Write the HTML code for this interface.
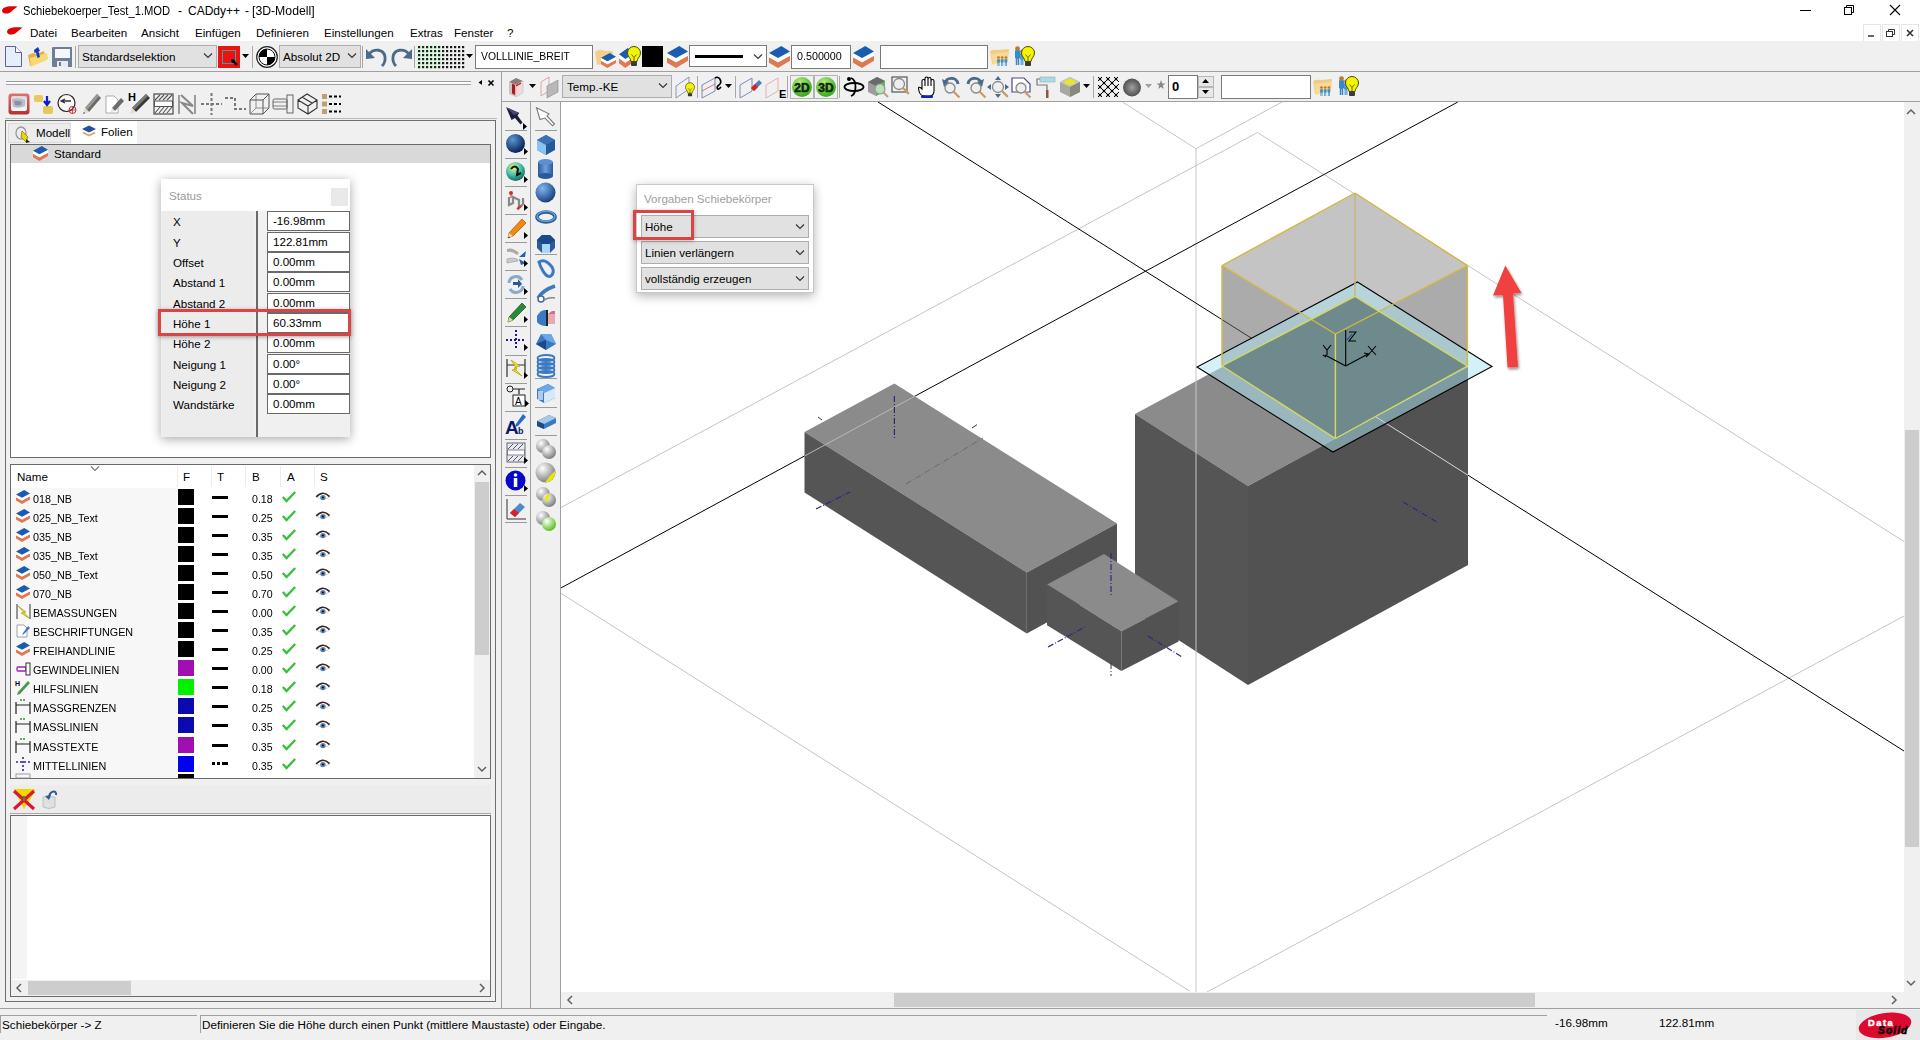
<!DOCTYPE html>
<html><head><meta charset="utf-8">
<style>
*{box-sizing:border-box;margin:0;padding:0}
html,body{width:1920px;height:1040px;overflow:hidden;background:#f0f0f0;font-family:"Liberation Sans",sans-serif;font-size:12px;color:#000}
.a{position:absolute}
.t{position:absolute;white-space:pre;line-height:14px}
svg{position:absolute;overflow:visible}
</style></head><body>

<div class="a" style="left:0px;top:0px;width:1920px;height:41px;background:#fff;"></div>
<svg style="left:0px;top:0px;" width="40" height="41" viewBox="0 0 40 41"><path d="M2 11 C2 7 8 5.5 17.5 6.5 C16 8 14 9 12.5 10.5 C10 14 3 15 2 11Z" fill="#e40000"/><path d="M7 32 C7 28 13 26.5 22.5 27.5 C21 29 19 30 17.5 31.5 C15 35 8 36 7 32Z" fill="#e40000"/></svg>
<div class="t" style="left:23px;top:3.6px;font-size:12px;color:#000;transform:scaleX(0.935);transform-origin:0 0;">Schiebekoerper_Test_1.MOD</div>
<div class="t" style="left:178px;top:3.6px;font-size:12px;color:#000;">-</div>
<div class="t" style="left:188px;top:3.6px;font-size:12px;color:#000;">CADdy++</div>
<div class="t" style="left:245px;top:3.6px;font-size:12px;color:#000;">-</div>
<div class="t" style="left:252px;top:3.6px;font-size:12px;color:#000;transform:scaleX(1.02);transform-origin:0 0;">[3D-Modell]</div>
<div class="t" style="left:30px;top:26px;font-size:11.6px;color:#000;">Datei</div>
<div class="t" style="left:71px;top:26px;font-size:11.6px;color:#000;">Bearbeiten</div>
<div class="t" style="left:141px;top:26px;font-size:11.6px;color:#000;">Ansicht</div>
<div class="t" style="left:195px;top:26px;font-size:11.6px;color:#000;">Einfügen</div>
<div class="t" style="left:256px;top:26px;font-size:11.6px;color:#000;">Definieren</div>
<div class="t" style="left:324px;top:26px;font-size:11.6px;color:#000;">Einstellungen</div>
<div class="t" style="left:410px;top:26px;font-size:11.6px;color:#000;">Extras</div>
<div class="t" style="left:454px;top:26px;font-size:11.6px;color:#000;">Fenster</div>
<div class="t" style="left:507px;top:26px;font-size:11.6px;color:#000;">?</div>
<svg style="left:1780px;top:0px;" width="140" height="41" viewBox="0 0 140 41"><line x1="20" y1="10.5" x2="31" y2="10.5" stroke="#000"/><rect x="64.5" y="7.5" width="7" height="7" fill="none" stroke="#000"/><path d="M66.5 7.5 V5.5 H73.5 V12.5 H71.5" fill="none" stroke="#000"/><path d="M110 5 L120 15 M120 5 L110 15" stroke="#000" stroke-width="1.1"/><rect x="83.5" y="24.5" width="17" height="17" fill="#fff" stroke="#e6e6e6"/><rect x="102.5" y="24.5" width="17" height="17" fill="#fff" stroke="#e6e6e6"/><rect x="121.5" y="24.5" width="17" height="17" fill="#fff" stroke="#e6e6e6"/><line x1="88" y1="36" x2="94" y2="36" stroke="#333" stroke-width="1.5"/><rect x="106.5" y="31.5" width="6" height="5" fill="none" stroke="#333"/><path d="M108.5 31.5 V29.5 H114.5 V34.5 H112.5" fill="none" stroke="#333"/><path d="M127 30 L133 36 M133 30 L127 36" stroke="#333" stroke-width="1.6"/></svg>
<div class="a" style="left:0px;top:41px;width:1920px;height:30px;background:#f0f0f0;"></div>
<div class="a" style="left:0px;top:71px;width:1920px;height:1px;background:#a0a0a0;"></div>
<svg style="left:5px;top:46px;" width="18" height="22" viewBox="0 0 18 22"><path d="M0.5 0.5 H10.5 L16.5 6.5 V20.5 H0.5Z" fill="#e6eefb" stroke="#5a648c"/><path d="M10.5 0.5 V6.5 H16.5" fill="#fff" stroke="#5a648c"/></svg>
<svg style="left:27px;top:46px;" width="21" height="22" viewBox="0 0 21 22"><path d="M1 9 L6 7 L9 8 L17 5 L19 14 L3 20Z" fill="#e8b040"/><path d="M3 12 L20 7 L21 13 L4 21Z" fill="#f8d870"/><path d="M7 4 L11 1 L13 5 L11.5 5.5 L13 11 L10.5 12 L9 6.5 L7.5 7Z" fill="#1038c0"/></svg>
<svg style="left:52px;top:47px;" width="21" height="21" viewBox="0 0 21 21"><path d="M0 1 Q0 0 1 0 H20 V20 H1 Q0 20 0 19Z" fill="#6e7e94"/><rect x="3" y="2" width="15" height="9" fill="#f4f6fa"/><rect x="5" y="14" width="11" height="6" fill="#e8ecf2"/><rect x="7" y="15" width="2" height="4" fill="#6e7e94"/></svg>
<div class="a" style="left:75px;top:46px;width:1px;height:22px;background:#a8a8a8;"></div>
<div class="a" style="left:78px;top:45px;width:139px;height:23px;background:#e1e1e1;border:1px solid #adadad;"></div>
<div class="t" style="left:82px;top:50px;font-size:11.7px;color:#000;">Standardselektion</div>
<svg style="left:203px;top:53px" width="10" height="6" viewBox="0 0 10 6"><path d="M1 0.5 L5 4.5 L9 0.5" fill="none" stroke="#333" stroke-width="1.1"/></svg>
<div class="a" style="left:218px;top:46px;width:22px;height:22px;background:#e81414;"></div>
<svg style="left:218px;top:46px;" width="22" height="22" viewBox="0 0 22 22"><rect x="4.5" y="4.5" width="13" height="13" fill="#f01010" stroke="#40a0a0" stroke-width="1"/><path d="M14 14 L19 19" stroke="#000" stroke-width="2.5"/><path d="M13 13 L17 14 L14 17Z" fill="#000"/></svg>
<svg style="left:242px;top:54px" width="7" height="4" viewBox="0 0 7 4"><path d="M0 0 H7 L3.5 4Z" fill="#000"/></svg>
<div class="a" style="left:252px;top:46px;width:1px;height:22px;background:#a8a8a8;"></div>
<svg style="left:256px;top:46px;" width="22" height="22" viewBox="0 0 22 22"><circle cx="11" cy="11" r="10.3" fill="#fff" stroke="#222" stroke-width="1.2"/><circle cx="11" cy="11" r="8" fill="#fff" stroke="#111" stroke-width="1"/><path d="M11 3 A8 8 0 0 0 3 11 H11Z" fill="#000"/><path d="M11 19 A8 8 0 0 0 19 11 H11Z" fill="#000"/></svg>
<div class="a" style="left:279px;top:45px;width:82px;height:23px;background:#e1e1e1;border:1px solid #adadad;"></div>
<div class="t" style="left:283px;top:50px;font-size:11.7px;color:#000;">Absolut 2D</div>
<svg style="left:347px;top:53px" width="10" height="6" viewBox="0 0 10 6"><path d="M1 0.5 L5 4.5 L9 0.5" fill="none" stroke="#333" stroke-width="1.1"/></svg>
<div class="a" style="left:362px;top:46px;width:1px;height:22px;background:#a8a8a8;"></div>
<svg style="left:366px;top:47px;" width="22" height="20" viewBox="0 0 22 20"><path d="M3 7 C8 1 18 2 19 10 C19.5 14 18 17 16 19" fill="none" stroke="#4a6b8a" stroke-width="2.8"/><path d="M0 2 L0 12 L9 11Z" fill="#4a6b8a"/></svg>
<svg style="left:390px;top:47px;" width="22" height="20" viewBox="0 0 22 20"><path d="M19 7 C14 1 4 2 3 10 C2.5 14 4 17 6 19" fill="none" stroke="#4a6b8a" stroke-width="2.8"/><path d="M22 2 L22 12 L13 11Z" fill="#4a6b8a"/></svg>
<div class="a" style="left:414px;top:46px;width:1px;height:22px;background:#a8a8a8;"></div>
<svg style="left:418px;top:46px;" width="48" height="24" viewBox="0 0 48 24"><rect x="-1" y="-1" width="24" height="24" fill="#dff5df" opacity="0.5"/><rect x="0" y="0" width="2.2" height="2.2" fill="#0a3010"/><rect x="4" y="0" width="2.2" height="2.2" fill="#0a3010"/><rect x="8" y="0" width="2.2" height="2.2" fill="#0a3010"/><rect x="12" y="0" width="2.2" height="2.2" fill="#0a3010"/><rect x="16" y="0" width="2.2" height="2.2" fill="#0a3010"/><rect x="20" y="0" width="2.2" height="2.2" fill="#0a3010"/><rect x="24" y="0" width="2.2" height="2.2" fill="#1a1a1a"/><rect x="28" y="0" width="2.2" height="2.2" fill="#1a1a1a"/><rect x="32" y="0" width="2.2" height="2.2" fill="#1a1a1a"/><rect x="36" y="0" width="2.2" height="2.2" fill="#1a1a1a"/><rect x="40" y="0" width="2.2" height="2.2" fill="#1a1a1a"/><rect x="44" y="0" width="2.2" height="2.2" fill="#1a1a1a"/><rect x="0" y="4" width="2.2" height="2.2" fill="#0a3010"/><rect x="4" y="4" width="2.2" height="2.2" fill="#0a3010"/><rect x="8" y="4" width="2.2" height="2.2" fill="#0a3010"/><rect x="12" y="4" width="2.2" height="2.2" fill="#0a3010"/><rect x="16" y="4" width="2.2" height="2.2" fill="#0a3010"/><rect x="20" y="4" width="2.2" height="2.2" fill="#0a3010"/><rect x="24" y="4" width="2.2" height="2.2" fill="#1a1a1a"/><rect x="28" y="4" width="2.2" height="2.2" fill="#1a1a1a"/><rect x="32" y="4" width="2.2" height="2.2" fill="#1a1a1a"/><rect x="36" y="4" width="2.2" height="2.2" fill="#1a1a1a"/><rect x="40" y="4" width="2.2" height="2.2" fill="#1a1a1a"/><rect x="44" y="4" width="2.2" height="2.2" fill="#1a1a1a"/><rect x="0" y="8" width="2.2" height="2.2" fill="#0a3010"/><rect x="4" y="8" width="2.2" height="2.2" fill="#0a3010"/><rect x="8" y="8" width="2.2" height="2.2" fill="#0a3010"/><rect x="12" y="8" width="2.2" height="2.2" fill="#0a3010"/><rect x="16" y="8" width="2.2" height="2.2" fill="#0a3010"/><rect x="20" y="8" width="2.2" height="2.2" fill="#0a3010"/><rect x="24" y="8" width="2.2" height="2.2" fill="#1a1a1a"/><rect x="28" y="8" width="2.2" height="2.2" fill="#1a1a1a"/><rect x="32" y="8" width="2.2" height="2.2" fill="#1a1a1a"/><rect x="36" y="8" width="2.2" height="2.2" fill="#1a1a1a"/><rect x="40" y="8" width="2.2" height="2.2" fill="#1a1a1a"/><rect x="44" y="8" width="2.2" height="2.2" fill="#1a1a1a"/><rect x="0" y="12" width="2.2" height="2.2" fill="#0a3010"/><rect x="4" y="12" width="2.2" height="2.2" fill="#0a3010"/><rect x="8" y="12" width="2.2" height="2.2" fill="#0a3010"/><rect x="12" y="12" width="2.2" height="2.2" fill="#0a3010"/><rect x="16" y="12" width="2.2" height="2.2" fill="#0a3010"/><rect x="20" y="12" width="2.2" height="2.2" fill="#0a3010"/><rect x="24" y="12" width="2.2" height="2.2" fill="#1a1a1a"/><rect x="28" y="12" width="2.2" height="2.2" fill="#1a1a1a"/><rect x="32" y="12" width="2.2" height="2.2" fill="#1a1a1a"/><rect x="36" y="12" width="2.2" height="2.2" fill="#1a1a1a"/><rect x="40" y="12" width="2.2" height="2.2" fill="#1a1a1a"/><rect x="44" y="12" width="2.2" height="2.2" fill="#1a1a1a"/><rect x="0" y="16" width="2.2" height="2.2" fill="#0a3010"/><rect x="4" y="16" width="2.2" height="2.2" fill="#0a3010"/><rect x="8" y="16" width="2.2" height="2.2" fill="#0a3010"/><rect x="12" y="16" width="2.2" height="2.2" fill="#0a3010"/><rect x="16" y="16" width="2.2" height="2.2" fill="#0a3010"/><rect x="20" y="16" width="2.2" height="2.2" fill="#0a3010"/><rect x="24" y="16" width="2.2" height="2.2" fill="#1a1a1a"/><rect x="28" y="16" width="2.2" height="2.2" fill="#1a1a1a"/><rect x="32" y="16" width="2.2" height="2.2" fill="#1a1a1a"/><rect x="36" y="16" width="2.2" height="2.2" fill="#1a1a1a"/><rect x="40" y="16" width="2.2" height="2.2" fill="#1a1a1a"/><rect x="44" y="16" width="2.2" height="2.2" fill="#1a1a1a"/><rect x="0" y="20" width="2.2" height="2.2" fill="#0a3010"/><rect x="4" y="20" width="2.2" height="2.2" fill="#0a3010"/><rect x="8" y="20" width="2.2" height="2.2" fill="#0a3010"/><rect x="12" y="20" width="2.2" height="2.2" fill="#0a3010"/><rect x="16" y="20" width="2.2" height="2.2" fill="#0a3010"/><rect x="20" y="20" width="2.2" height="2.2" fill="#0a3010"/><rect x="24" y="20" width="2.2" height="2.2" fill="#1a1a1a"/><rect x="28" y="20" width="2.2" height="2.2" fill="#1a1a1a"/><rect x="32" y="20" width="2.2" height="2.2" fill="#1a1a1a"/><rect x="36" y="20" width="2.2" height="2.2" fill="#1a1a1a"/><rect x="40" y="20" width="2.2" height="2.2" fill="#1a1a1a"/><rect x="44" y="20" width="2.2" height="2.2" fill="#1a1a1a"/></svg>
<svg style="left:466px;top:54px" width="7" height="4" viewBox="0 0 7 4"><path d="M0 0 H7 L3.5 4Z" fill="#000"/></svg>
<div class="a" style="left:475px;top:45px;width:118px;height:24px;background:#fff;border:1px solid #7a7a7a;"></div>
<div class="t" style="left:481px;top:49px;font-size:11.8px;color:#000;transform:scaleX(0.88);transform-origin:0 0;">VOLLLINIE_BREIT</div>
<svg style="left:594px;top:46px;" width="22" height="22" viewBox="0 0 22 22"><path d="M1 6 Q4 3 8 4 L12 5 Q17 4 19 6 L18 16 L3 19Z" fill="#f3c870" opacity="0.8"/></svg>
<svg style="left:601px;top:53px" width="15" height="15" viewBox="0 0 14 14" preserveAspectRatio="none"><path d="M0 7.2 L6 10.4 L14 6.2 L14 9.4 L6 14 L0 10.6Z" fill="#e07850"/><path d="M0 4.4 L6 7.7 L14 3.5 L14 6.2 L6 10.4 L0 7.2Z" fill="#fff"/><path d="M0 4.4 L8.2 0 L14 3.5 L6 7.7Z" fill="#1a5cb0"/></svg>
<svg style="left:619px;top:48px" width="15" height="20" viewBox="0 0 14 14" preserveAspectRatio="none"><path d="M0 7.2 L6 10.4 L14 6.2 L14 9.4 L6 14 L0 10.6Z" fill="#e07850"/><path d="M0 4.4 L6 7.7 L14 3.5 L14 6.2 L6 10.4 L0 7.2Z" fill="#fff"/><path d="M0 4.4 L8.2 0 L14 3.5 L6 7.7Z" fill="#1a5cb0"/></svg>
<svg style="left:618px;top:46px;" width="24" height="22" viewBox="0 0 24 22"><g transform="translate(16 9.5) scale(1.0)"><path d="M-3 6 C-3 3 -6.5 1 -6.5 -2.5 A6.5 6.5 0 0 1 6.5 -2.5 C6.5 1 3 3 3 6Z" fill="#f4f400" stroke="#4a4a10" stroke-width="1"/><path d="M-2.5 -1 L0 2 L2.5 -1 M0 2 V6" stroke="#6a6a10" stroke-width="1" fill="none"/><rect x="-3" y="6" width="6" height="4.5" rx="1" fill="#3a3a3a"/></g></svg>
<div class="a" style="left:642px;top:46px;width:21px;height:21px;background:#000;"></div>
<svg style="left:667px;top:46px" width="21" height="22" viewBox="0 0 14 14" preserveAspectRatio="none"><path d="M0 7.2 L6 10.4 L14 6.2 L14 9.4 L6 14 L0 10.6Z" fill="#e07850"/><path d="M0 4.4 L6 7.7 L14 3.5 L14 6.2 L6 10.4 L0 7.2Z" fill="#fff"/><path d="M0 4.4 L8.2 0 L14 3.5 L6 7.7Z" fill="#1a5cb0"/></svg>
<div class="a" style="left:689px;top:45px;width:78px;height:22px;background:#fff;border:1px solid #7a7a7a;"></div>
<div class="a" style="left:695px;top:55px;width:48px;height:3px;background:#000;"></div>
<svg style="left:753px;top:54px" width="10" height="6" viewBox="0 0 10 6"><path d="M1 0.5 L5 4.5 L9 0.5" fill="none" stroke="#333" stroke-width="1.1"/></svg>
<svg style="left:769px;top:46px" width="21" height="22" viewBox="0 0 14 14" preserveAspectRatio="none"><path d="M0 7.2 L6 10.4 L14 6.2 L14 9.4 L6 14 L0 10.6Z" fill="#e07850"/><path d="M0 4.4 L6 7.7 L14 3.5 L14 6.2 L6 10.4 L0 7.2Z" fill="#fff"/><path d="M0 4.4 L8.2 0 L14 3.5 L6 7.7Z" fill="#1a5cb0"/></svg>
<div class="a" style="left:791px;top:45px;width:60px;height:24px;background:#fff;border:1px solid #7a7a7a;"></div>
<div class="t" style="left:797px;top:49px;font-size:11.8px;color:#000;transform:scaleX(0.91);transform-origin:0 0;">0.500000</div>
<svg style="left:853px;top:46px" width="21" height="22" viewBox="0 0 14 14" preserveAspectRatio="none"><path d="M0 7.2 L6 10.4 L14 6.2 L14 9.4 L6 14 L0 10.6Z" fill="#e07850"/><path d="M0 4.4 L6 7.7 L14 3.5 L14 6.2 L6 10.4 L0 7.2Z" fill="#fff"/><path d="M0 4.4 L8.2 0 L14 3.5 L6 7.7Z" fill="#1a5cb0"/></svg>
<div class="a" style="left:880px;top:45px;width:108px;height:24px;background:#fff;border:1px solid #7a7a7a;"></div>
<svg style="left:989px;top:46px;" width="22" height="22" viewBox="0 0 22 22"><path d="M1 5 Q5 3 9 4 L20 3 L19 14 L3 18Z" fill="#f2c878" opacity="0.9"/><path d="M2 8 L19 6 L18 15 L4 19Z" fill="#f8dc98" opacity="0.9"/><circle cx="9.5" cy="11.5" r="1.3299999999999998" fill="#b87a30"/><path d="M8.1 13.2 H10.9 V16.2 H10.48 V20 H9.75 V16.8 H9.25 V20 H8.52 V16.2 H8.1Z" fill="#3a90c8"/><circle cx="13.2" cy="11.5" r="1.3299999999999998" fill="#b87a30"/><path d="M11.799999999999999 13.2 H14.6 V16.2 H14.18 V20 H13.45 V16.8 H12.95 V20 H12.219999999999999 V16.2 H11.799999999999999Z" fill="#3a90c8"/><circle cx="16.9" cy="11.5" r="1.3299999999999998" fill="#b87a30"/><path d="M15.499999999999998 13.2 H18.299999999999997 V16.2 H17.88 V20 H17.15 V16.8 H16.65 V20 H15.919999999999998 V16.2 H15.499999999999998Z" fill="#3a90c8"/></svg>
<svg style="left:1013px;top:46px;" width="22" height="22" viewBox="0 0 22 22"><circle cx="9" cy="5.5" r="1.9" fill="#b87a30"/><path d="M7.0 7.2 H11.0 V13.3 H10.4 V19 H9.25 V14.200000000000001 H8.75 V19 H7.6 V13.3 H7.0Z" fill="#4a9ad8"/><circle cx="4.5" cy="2.5" r="2.375" fill="#b87a30"/><path d="M2.0 4.2 H7.0 V12.16 H6.25 V19 H4.75 V13.24 H4.25 V19 H2.75 V12.16 H2.0Z" fill="#3a88c8"/><g transform="translate(15 9.5) scale(1.0)"><path d="M-3 6 C-3 3 -6.5 1 -6.5 -2.5 A6.5 6.5 0 0 1 6.5 -2.5 C6.5 1 3 3 3 6Z" fill="#f4f400" stroke="#4a4a10" stroke-width="1"/><path d="M-2.5 -1 L0 2 L2.5 -1 M0 2 V6" stroke="#6a6a10" stroke-width="1" fill="none"/><rect x="-3" y="6" width="6" height="4.5" rx="1" fill="#3a3a3a"/></g></svg>
<div class="a" style="left:502px;top:72px;width:1418px;height:29px;background:#f0f0f0;"></div>
<div class="a" style="left:502px;top:101px;width:1418px;height:1px;background:#a0a0a0;"></div>
<div class="a" style="left:501px;top:72px;width:1px;height:936px;background:#a0a0a0;"></div>
<svg style="left:507px;top:76px;" width="20" height="22" viewBox="0 0 20 22"><path d="M2 6 L9 2 L16 5 L9 9Z" fill="#8a7a7a"/><path d="M2 6 L9 9 V21 L2 18Z" fill="#d0c0c0"/><path d="M9 9 L16 5 V17 L9 21Z" fill="#f2d8d8" stroke="#c0c0d8" stroke-width="0.6"/><path d="M5 7.5 L8 9 V19 L5 17.5Z" fill="#b01818"/><path d="M9 9 L14 6.5 V8 L9 10.5Z" fill="#c02020"/></svg>
<svg style="left:529px;top:84px" width="7" height="4" viewBox="0 0 7 4"><path d="M0 0 H7 L3.5 4Z" fill="#000"/></svg>
<svg style="left:540px;top:76px;" width="20" height="22" viewBox="0 0 20 22"><path d="M1 6 L9 1 V15 L1 20Z" fill="none" stroke="#e09090" stroke-width="0.8"/><path d="M7 10 L18 4 V16 L7 22Z" fill="#b8b8b8" stroke="#888" stroke-width="0.6"/></svg>
<div class="a" style="left:562px;top:75px;width:110px;height:23px;background:#e1e1e1;border:1px solid #adadad;"></div>
<div class="t" style="left:567px;top:80px;font-size:11.7px;color:#000;">Temp.-KE</div>
<svg style="left:658px;top:83px" width="10" height="6" viewBox="0 0 10 6"><path d="M1 0.5 L5 4.5 L9 0.5" fill="none" stroke="#333" stroke-width="1.1"/></svg>
<svg style="left:675px;top:76px;" width="22" height="22" viewBox="0 0 22 22"><path d="M1 10 L14 1 V13 L1 22Z" fill="none" stroke="#7080b0" stroke-width="0.8"/><g transform="translate(15 13) scale(0.7)"><path d="M-3 6 C-3 3 -6.5 1 -6.5 -2.5 A6.5 6.5 0 0 1 6.5 -2.5 C6.5 1 3 3 3 6Z" fill="#f4f400" stroke="#4a4a10" stroke-width="1"/><path d="M-2.5 -1 L0 2 L2.5 -1 M0 2 V6" stroke="#6a6a10" stroke-width="1" fill="none"/><rect x="-3" y="6" width="6" height="4.5" rx="1" fill="#3a3a3a"/></g></svg>
<div class="a" style="left:697px;top:76px;width:1px;height:22px;background:#a8a8a8;"></div>
<svg style="left:701px;top:76px;" width="24" height="22" viewBox="0 0 24 22"><path d="M1 9 L14 2 V15 L1 22Z" fill="none" stroke="#6070b0" stroke-width="0.8"/><path d="M1 15 L14 8" stroke="#d04040" stroke-width="0.7"/><path d="M14 2 C18 -1 22 6 18 9 C15 11 16 16 20 11" fill="none" stroke="#000" stroke-width="1.6"/></svg>
<svg style="left:725px;top:84px" width="7" height="4" viewBox="0 0 7 4"><path d="M0 0 H7 L3.5 4Z" fill="#000"/></svg>
<div class="a" style="left:735px;top:76px;width:1px;height:22px;background:#a8a8a8;"></div>
<svg style="left:739px;top:76px;" width="24" height="22" viewBox="0 0 24 22"><path d="M1 9 L13 2 V15 L1 22Z" fill="none" stroke="#6070b0" stroke-width="0.8"/><path d="M12 12 L20 4 L23 7 L15 15Z" fill="#5080b8"/><path d="M12 12 L16 8 L19 11 L15 15Z" fill="#e02020"/></svg>
<svg style="left:765px;top:76px;" width="24" height="22" viewBox="0 0 24 22"><path d="M1 9 L13 2 V15 L1 22Z" fill="none" stroke="#e0a0a0" stroke-width="0.8"/><text x="14" y="22" font-family="Liberation Sans" font-weight="bold" font-size="11" fill="#000">E</text></svg>
<div class="a" style="left:787px;top:76px;width:1px;height:22px;background:#a8a8a8;"></div>
<div class="a" style="left:790px;top:75px;width:24px;height:24px;background:none;border:1px solid #b4b4b4;"></div>
<div class="a" style="left:814px;top:75px;width:24px;height:24px;background:none;border:1px solid #b4b4b4;"></div>
<svg style="left:791px;top:76px;" width="22" height="22" viewBox="0 0 22 22"><defs><radialGradient id="g2D" cx="0.4" cy="0.3" r="0.7"><stop offset="0" stop-color="#b8f080"/><stop offset="1" stop-color="#38a818"/></radialGradient></defs><circle cx="11" cy="11" r="10" fill="url(#g2D)"/><text x="11" y="15.5" text-anchor="middle" font-family="Liberation Sans" font-weight="bold" font-size="12" fill="#0a2a0a" stroke="#0a2a0a" stroke-width="0.6">2D</text></svg>
<svg style="left:815px;top:76px;" width="22" height="22" viewBox="0 0 22 22"><defs><radialGradient id="g3D" cx="0.4" cy="0.3" r="0.7"><stop offset="0" stop-color="#b8f080"/><stop offset="1" stop-color="#38a818"/></radialGradient></defs><circle cx="11" cy="11" r="10" fill="url(#g3D)"/><text x="11" y="15.5" text-anchor="middle" font-family="Liberation Sans" font-weight="bold" font-size="12" fill="#0a2a0a" stroke="#0a2a0a" stroke-width="0.6">3D</text></svg>
<div class="a" style="left:839px;top:76px;width:1px;height:22px;background:#a8a8a8;"></div>
<svg style="left:843px;top:76px;" width="22" height="22" viewBox="0 0 22 22"><ellipse cx="11" cy="11" rx="9.5" ry="4" fill="none" stroke="#000" stroke-width="1.8"/><path d="M8 2 C14 4 14 18 8 20" fill="none" stroke="#000" stroke-width="1.8"/><circle cx="6" cy="3" r="2" fill="#000"/></svg>
<svg style="left:867px;top:76px;" width="22" height="22" viewBox="0 0 22 22"><path d="M1 6 L10 1 L18 5 V15 L9 20 L1 16Z" fill="#9c9c9c"/><path d="M9 10 L18 5 V15 L9 20Z" fill="#4cc04c"/><path d="M1 6 L10 1 L18 5 L9 10Z" fill="#6a6a6a"/><circle cx="13" cy="13" r="5" fill="#e8f0e8" fill-opacity="0.7" stroke="#999" stroke-width="1.2"/><path d="M16.5 16.5 L21 21" stroke="#c8a070" stroke-width="2"/></svg>
<svg style="left:891px;top:76px;" width="22" height="22" viewBox="0 0 22 22"><rect x="1" y="1" width="15" height="15" fill="none" stroke="#555" stroke-width="1.2"/><circle cx="8" cy="8" r="5.5" fill="#eeeeee" stroke="#888" stroke-width="1.3"/><path d="M11.85 11.85 L17.85 17.85" stroke="#c89a68" stroke-width="2.2"/></svg>
<svg style="left:918px;top:76px;" width="18" height="22" viewBox="0 0 18 22"><path d="M4 13 V5 Q4 3.5 5.5 3.5 Q7 3.5 7 5 V10 V2.5 Q7 1 8.5 1 Q10 1 10 2.5 V10 V3 Q10 1.5 11.5 1.5 Q13 1.5 13 3 V10 V5 Q13 3.5 14.5 3.5 Q16 3.5 16 5 V15 Q16 20 11 20 H7 Q2 20 1 15 L0.5 12 Q1 10 4 13Z" fill="#fff" stroke="#000" stroke-width="1.1"/><rect x="3" y="19.5" width="12" height="2.5" rx="1" fill="#1020c0"/></svg>
<svg style="left:942px;top:76px;" width="20" height="22" viewBox="0 0 20 22"><path d="M3 8 C3 1 15 0 16 8" fill="none" stroke="#4a6b8a" stroke-width="3"/><path d="M0 3 L2 11 L7 6Z" fill="#4a6b8a"/><circle cx="8" cy="12" r="5" fill="#eeeeee" stroke="#888" stroke-width="1.3"/><path d="M11.5 15.5 L17.5 21.5" stroke="#c89a68" stroke-width="2.2"/></svg>
<svg style="left:965px;top:76px;" width="20" height="22" viewBox="0 0 20 22"><path d="M3 8 C4 0 16 1 16 8" fill="none" stroke="#4a6b8a" stroke-width="3"/><path d="M19 3 L17 11 L12 6Z" fill="#4a6b8a"/><circle cx="11" cy="12" r="5" fill="#eeeeee" stroke="#888" stroke-width="1.3"/><path d="M14.5 15.5 L20.5 21.5" stroke="#c89a68" stroke-width="2.2"/></svg>
<svg style="left:987px;top:76px;" width="22" height="22" viewBox="0 0 22 22"><path d="M11 0 L14 4 H8Z M11 22 L14 18 H8Z M0 11 L4 8 V14Z M22 11 L18 8 V14Z" fill="#4a6b8a"/><circle cx="11" cy="11" r="5.5" fill="#eeeeee" stroke="#888" stroke-width="1.3"/><path d="M14.85 14.85 L20.85 20.85" stroke="#c89a68" stroke-width="2.2"/></svg>
<svg style="left:1011px;top:76px;" width="22" height="22" viewBox="0 0 22 22"><path d="M1 2 H13 L19 8 V16 H1Z" fill="#fff" stroke="#4a4a8a" stroke-width="1.2"/><circle cx="10" cy="12" r="5" fill="#eeeeee" stroke="#888" stroke-width="1.3"/><path d="M13.5 15.5 L19.5 21.5" stroke="#c89a68" stroke-width="2.2"/></svg>
<svg style="left:1036px;top:76px;" width="20" height="22" viewBox="0 0 20 22"><rect x="4" y="1" width="15" height="5" fill="#a8dce4" stroke="#9ab" stroke-width="0.6"/><path d="M4 3 H1 V9 H11 V14" fill="none" stroke="#777" stroke-width="1.2"/><rect x="10" y="14" width="2.5" height="8" fill="#8a5a3a"/></svg>
<svg style="left:1059px;top:76px;" width="22" height="22" viewBox="0 0 22 22"><path d="M1 6 L11 1 L21 6 V16 L11 21 L1 16Z" fill="#a8a8a0"/><path d="M1 6 L11 1 L21 6 L11 11Z" fill="#c8c8b8"/><path d="M11 11 L21 6 V16 L11 21Z" fill="#888880"/><ellipse cx="11" cy="6" rx="5" ry="2.8" fill="#e8e820"/></svg>
<svg style="left:1083px;top:84px" width="7" height="4" viewBox="0 0 7 4"><path d="M0 0 H7 L3.5 4Z" fill="#000"/></svg>
<div class="a" style="left:1093px;top:76px;width:1px;height:22px;background:#a8a8a8;"></div>
<svg style="left:1097px;top:76px;" width="22" height="22" viewBox="0 0 22 22"><defs><clipPath id="hx"><rect x="1" y="1" width="21" height="21"/></clipPath></defs><g clip-path="url(#hx)"><line x1="-15" y1="1" x2="5" y2="21" stroke="#000" stroke-width="1"/><line x1="-7" y1="1" x2="13" y2="21" stroke="#000" stroke-width="1"/><line x1="1" y1="1" x2="21" y2="21" stroke="#000" stroke-width="1"/><line x1="9" y1="1" x2="29" y2="21" stroke="#000" stroke-width="1"/><line x1="17" y1="1" x2="37" y2="21" stroke="#000" stroke-width="1"/><line x1="5" y1="1" x2="-15" y2="21" stroke="#000" stroke-width="1"/><line x1="13" y1="1" x2="-7" y2="21" stroke="#000" stroke-width="1"/><line x1="21" y1="1" x2="1" y2="21" stroke="#000" stroke-width="1"/><line x1="29" y1="1" x2="9" y2="21" stroke="#000" stroke-width="1"/><line x1="37" y1="1" x2="17" y2="21" stroke="#000" stroke-width="1"/><rect x="1.8" y="1.8" width="2.4" height="2.4" fill="#000"/><rect x="9.8" y="1.8" width="2.4" height="2.4" fill="#000"/><rect x="17.8" y="1.8" width="2.4" height="2.4" fill="#000"/><rect x="5.8" y="5.8" width="2.4" height="2.4" fill="#000"/><rect x="13.8" y="5.8" width="2.4" height="2.4" fill="#000"/><rect x="1.8" y="9.8" width="2.4" height="2.4" fill="#000"/><rect x="9.8" y="9.8" width="2.4" height="2.4" fill="#000"/><rect x="17.8" y="9.8" width="2.4" height="2.4" fill="#000"/><rect x="5.8" y="13.8" width="2.4" height="2.4" fill="#000"/><rect x="13.8" y="13.8" width="2.4" height="2.4" fill="#000"/><rect x="1.8" y="17.8" width="2.4" height="2.4" fill="#000"/><rect x="9.8" y="17.8" width="2.4" height="2.4" fill="#000"/><rect x="17.8" y="17.8" width="2.4" height="2.4" fill="#000"/></g></svg>
<svg style="left:1123px;top:78px;" width="20" height="20" viewBox="0 0 20 20"><defs><radialGradient id="gb" cx="0.5" cy="0.5" r="0.5"><stop offset="0" stop-color="#a0a0a0"/><stop offset="1" stop-color="#505050"/></radialGradient></defs><circle cx="9" cy="9.5" r="9" fill="url(#gb)"/></svg>
<svg style="left:1145px;top:84px" width="7" height="4" viewBox="0 0 7 4"><path d="M0 0 H7 L3.5 4Z" fill="#a0a0a0"/></svg>
<svg style="left:1156px;top:78px;" width="10" height="14" viewBox="0 0 10 14"><path d="M5 2 L6.2 5.5 L9.5 5.5 L6.8 7.6 L7.8 11 L5 9 L2.2 11 L3.2 7.6 L0.5 5.5 L3.8 5.5Z" fill="#888"/></svg>
<div class="a" style="left:1168px;top:75px;width:30px;height:24px;background:#fff;border:1px solid #7a7a7a;"></div>
<div class="t" style="left:1172px;top:80px;font-size:13px;color:#000;font-weight:bold">0</div>
<div class="a" style="left:1198px;top:76px;width:16px;height:11px;background:#e8e8e8;border:1px solid #b8b8b8;"></div>
<div class="a" style="left:1198px;top:87px;width:16px;height:11px;background:#e8e8e8;border:1px solid #b8b8b8;"></div>
<svg style="left:1202px;top:79px;" width="8" height="4" viewBox="0 0 8 4"><path d="M0 4 H7 L3.5 0Z" fill="#000"/></svg>
<svg style="left:1202px;top:90px;" width="8" height="4" viewBox="0 0 8 4"><path d="M0 0 H7 L3.5 4Z" fill="#000"/></svg>
<div class="a" style="left:1221px;top:75px;width:90px;height:24px;background:#fff;border:1px solid #7a7a7a;"></div>
<svg style="left:1312px;top:76px;" width="22" height="22" viewBox="0 0 22 22"><path d="M1 5 Q5 3 9 4 L20 3 L19 14 L3 18Z" fill="#f2c878" opacity="0.9"/><path d="M2 8 L19 6 L18 15 L4 19Z" fill="#f8dc98" opacity="0.9"/><circle cx="9.5" cy="11.5" r="1.3299999999999998" fill="#b87a30"/><path d="M8.1 13.2 H10.9 V16.2 H10.48 V20 H9.75 V16.8 H9.25 V20 H8.52 V16.2 H8.1Z" fill="#3a90c8"/><circle cx="13.2" cy="11.5" r="1.3299999999999998" fill="#b87a30"/><path d="M11.799999999999999 13.2 H14.6 V16.2 H14.18 V20 H13.45 V16.8 H12.95 V20 H12.219999999999999 V16.2 H11.799999999999999Z" fill="#3a90c8"/><circle cx="16.9" cy="11.5" r="1.3299999999999998" fill="#b87a30"/><path d="M15.499999999999998 13.2 H18.299999999999997 V16.2 H17.88 V20 H17.15 V16.8 H16.65 V20 H15.919999999999998 V16.2 H15.499999999999998Z" fill="#3a90c8"/></svg>
<svg style="left:1337px;top:76px;" width="22" height="22" viewBox="0 0 22 22"><circle cx="9" cy="5.5" r="1.9" fill="#b87a30"/><path d="M7.0 7.2 H11.0 V13.3 H10.4 V19 H9.25 V14.200000000000001 H8.75 V19 H7.6 V13.3 H7.0Z" fill="#4a9ad8"/><circle cx="4.5" cy="2.5" r="2.375" fill="#b87a30"/><path d="M2.0 4.2 H7.0 V12.16 H6.25 V19 H4.75 V13.24 H4.25 V19 H2.75 V12.16 H2.0Z" fill="#3a88c8"/><g transform="translate(15 9.5) scale(1.0)"><path d="M-3 6 C-3 3 -6.5 1 -6.5 -2.5 A6.5 6.5 0 0 1 6.5 -2.5 C6.5 1 3 3 3 6Z" fill="#f4f400" stroke="#4a4a10" stroke-width="1"/><path d="M-2.5 -1 L0 2 L2.5 -1 M0 2 V6" stroke="#6a6a10" stroke-width="1" fill="none"/><rect x="-3" y="6" width="6" height="4.5" rx="1" fill="#3a3a3a"/></g></svg>
<div class="a" style="left:0px;top:72px;width:501px;height:936px;background:#f0f0f0;"></div>
<div class="a" style="left:6px;top:81px;width:465px;height:1px;background:#a0a0a0;"></div>
<div class="a" style="left:6px;top:82px;width:465px;height:2px;background:#fdfdfd;"></div>
<div class="a" style="left:6px;top:84px;width:465px;height:1px;background:#a0a0a0;"></div>
<svg style="left:476px;top:78px;" width="24" height="10" viewBox="0 0 24 10"><path d="M6 2 L2.5 4.5 L6 7Z" fill="#000"/><path d="M12.5 2.5 L17.5 7.5 M17.5 2.5 L12.5 7.5" stroke="#000" stroke-width="1.6"/></svg>
<svg style="left:8px;top:93px;" width="22" height="22" viewBox="0 0 22 22"><defs><linearGradient id="rq" x1="0" y1="0" x2="0" y2="1"><stop offset="0" stop-color="#e07070"/><stop offset="1" stop-color="#b83030"/></linearGradient><linearGradient id="rq2" x1="0" y1="0" x2="0" y2="1"><stop offset="0" stop-color="#d8d8dc"/><stop offset="1" stop-color="#fafafa"/></linearGradient></defs><rect x="0.5" y="0.5" width="21" height="21" rx="3" fill="url(#rq)"/><rect x="3" y="3" width="16" height="15" rx="2" fill="url(#rq2)"/><path d="M4 6 Q10 4 17 7 V13 Q12 16 5 14Z" fill="#b8bcc8"/><path d="M6 8 Q10 7 14 9 L13 12 Q9 13 7 12Z" fill="#8a90a8"/></svg>
<svg style="left:33px;top:93px;" width="21" height="22" viewBox="0 0 21 22"><rect x="1" y="2" width="9" height="7" rx="2" fill="#e8c858"/><rect x="10" y="13" width="10" height="8" rx="2" fill="#e8c858"/><path d="M14 3 V11 M11 8 L14 12 L17 8" stroke="#0a20c8" stroke-width="2.2" fill="none"/></svg>
<svg style="left:57px;top:93px;" width="21" height="22" viewBox="0 0 21 22"><circle cx="9.5" cy="10" r="8.5" fill="#f8f8f8" stroke="#222" stroke-width="1.2"/><path d="M14 8 H5 M8 6 L4 8 L8 10" stroke="#333" stroke-width="1.3" fill="none"/><circle cx="15.5" cy="17" r="3.5" fill="none" stroke="#c03030" stroke-width="1"/><path d="M12 17 H19 M15.5 13.5 V20.5" stroke="#c03030" stroke-width="0.8"/></svg>
<svg style="left:82px;top:93px;" width="19" height="22" viewBox="0 0 19 22"><path d="M15 1 L19 5 L7 19 L3 15Z" fill="#6a6a6a"/><path d="M15 1 L17 3 L5 17 L3 15Z" fill="#9a9a9a"/><path d="M3 15 L7 19 L1 21Z" fill="#e8dcc8"/><path d="M1 21 L2 19 L3 20Z" fill="#333"/></svg>
<svg style="left:105px;top:93px;" width="20" height="22" viewBox="0 0 20 22"><path d="M1 3 H9 L13 7 V20 H1Z" fill="#fff" stroke="#999" stroke-width="0.8"/><path d="M16 5 L19 8 L10 18 L7 15Z" fill="#6a6a6a"/><path d="M7 15 L10 18 L6 19Z" fill="#ddd"/></svg>
<svg style="left:128px;top:91px;" width="22" height="24" viewBox="0 0 22 24"><text x="0" y="10" font-family="Liberation Sans" font-weight="bold" font-size="11">H</text><path d="M18 3 L22 7 L8 21 L4 17Z" fill="#3a3a3a"/><path d="M18 3 L20 5 L6 19 L4 17Z" fill="#7a7a7a"/><path d="M4 17 L8 21 L2 23Z" fill="#e8dcc8"/></svg>
<svg style="left:153px;top:93px;" width="21" height="22" viewBox="0 0 21 22"><rect x="1" y="1" width="19" height="20" fill="#f0f0f0" stroke="#555" stroke-width="1.3"/><rect x="1.5" y="8" width="18" height="5.5" fill="#fff" stroke="#555" stroke-width="1"/><path d="M2 7 L7 2 M6 7 L11 2 M10 7 L15 2 M14 7 L19 2 M2 20 L7 14 M6 20 L11 14 M10 20 L15 14 M14 20 L19 14" stroke="#555" stroke-width="1.1"/></svg>
<svg style="left:178px;top:93px;" width="18" height="22" viewBox="0 0 18 22"><path d="M1 2 V21 M17 2 V21" stroke="#666" stroke-width="1.2"/><path d="M3 2 L15 13 L4 10 L15 21" stroke="#888" stroke-width="2" fill="none"/></svg>
<svg style="left:201px;top:93px;" width="21" height="22" viewBox="0 0 21 22"><path d="M10.5 0 V22 M0 11 H21" stroke="#777" stroke-width="2" stroke-dasharray="3 2"/></svg>
<svg style="left:225px;top:93px;" width="21" height="22" viewBox="0 0 21 22"><path d="M0 5 H10 V16 H21" stroke="#777" stroke-width="2" fill="none" stroke-dasharray="3 2"/></svg>
<svg style="left:249px;top:93px;" width="21" height="22" viewBox="0 0 21 22"><path d="M1 7 L7 1 H20 V15 L14 21 H1Z M1 7 H14 V21 M14 7 L20 1" fill="none" stroke="#555" stroke-width="1"/><path d="M7 1 V15 H20 M7 15 L1 21" fill="none" stroke="#777" stroke-width="0.8"/></svg>
<svg style="left:272px;top:93px;" width="22" height="22" viewBox="0 0 22 22"><rect x="1" y="6" width="14" height="10" rx="1.5" fill="none" stroke="#666"/><path d="M1 9 H15 M1 13 H15" stroke="#666" stroke-width="0.8"/><rect x="15" y="2" width="6" height="18" fill="none" stroke="#666"/></svg>
<svg style="left:297px;top:92px;" width="21" height="23" viewBox="0 0 21 23"><path d="M1 8 L10 2 L20 8 V16 L11 22 L1 16Z M1 8 L11 14 L20 8 M11 14 V22 M5 5 L15 11" fill="none" stroke="#333" stroke-width="1.1"/></svg>
<svg style="left:321px;top:93px;" width="21" height="22" viewBox="0 0 21 22"><rect x="1" y="1" width="5" height="5" fill="#c0a070"/><rect x="1" y="8.5" width="5" height="5" fill="#c0a070"/><rect x="1" y="16" width="5" height="5" fill="#c0a070"/><path d="M8 3.5 H20 M8 11 H20 M8 18.5 H20" stroke="#000" stroke-width="2" stroke-dasharray="3 2"/></svg>
<div class="a" style="left:5px;top:118px;width:492px;height:1px;background:#b8b8b8;"></div>
<div class="a" style="left:5px;top:120px;width:491px;height:882px;background:#f0f0f0;border:1px solid #6e6e6e;"></div>
<div class="a" style="left:8px;top:123px;width:63px;height:20px;background:#ececec;border:1px solid #dadada;"></div>
<svg style="left:14px;top:125px;" width="18" height="18" viewBox="0 0 18 18"><ellipse cx="7" cy="8" rx="5" ry="6" fill="none" stroke="#999" stroke-width="1.3"/><path d="M8 6 L14 12 L12 17 L7 12Z" fill="#e8d800" stroke="#706000" stroke-width="0.6"/><path d="M12 14 L16 17 L12 18Z" fill="#222"/></svg>
<div class="t" style="left:36px;top:126px;font-size:11.6px;color:#000;">Modell</div>
<div class="a" style="left:71px;top:121px;width:66px;height:23px;background:#fff;"></div>
<svg style="left:81px;top:124px;" width="16" height="16" viewBox="0 0 16 16"><path d="M1 9 L8 5.5 L15 9 L8 12.5Z" fill="#e8a060"/><path d="M1 7 L8 3.5 L15 7 L8 10.5Z" fill="#fff"/><path d="M1 5 L8 1.5 L15 5 L8 8.5Z" fill="#2050a0"/></svg>
<div class="t" style="left:101px;top:125px;font-size:11.6px;color:#000;">Folien</div>
<div class="a" style="left:10px;top:144px;width:481px;height:314px;background:#fff;border:1px solid #6a6a6a;"></div>
<div class="a" style="left:11px;top:145px;width:479px;height:18px;background:#d9d9d9;"></div>
<svg style="left:33px;top:146px" width="15" height="15" viewBox="0 0 14 14" preserveAspectRatio="none"><path d="M0 7.2 L6 10.4 L14 6.2 L14 9.4 L6 14 L0 10.6Z" fill="#e07850"/><path d="M0 4.4 L6 7.7 L14 3.5 L14 6.2 L6 10.4 L0 7.2Z" fill="#fff"/><path d="M0 4.4 L8.2 0 L14 3.5 L6 7.7Z" fill="#1a5cb0"/></svg>
<div class="t" style="left:54px;top:147px;font-size:11.6px;color:#000;">Standard</div>
<div class="a" style="left:161px;top:179px;width:189px;height:258px;background:#f0f0f0;box-shadow:0 2px 10px rgba(0,0,0,0.35)"></div>
<div class="a" style="left:161px;top:179px;width:189px;height:32px;background:#fff;"></div>
<div class="t" style="left:169px;top:189px;font-size:11.6px;color:#9a9a9a;">Status</div>
<div class="a" style="left:331px;top:188px;width:17px;height:18px;background:#e9e9e9;"></div>
<div class="a" style="left:162px;top:211px;width:92px;height:226px;background:#ececec;"></div>
<div class="a" style="left:256px;top:211px;width:2px;height:226px;background:#6a6a6a;"></div>
<div class="t" style="left:173px;top:215px;font-size:11.6px;color:#000;">X</div>
<div class="a" style="left:267px;top:211px;width:83px;height:20px;background:#fff;border:1px solid #6a6a6a;"></div>
<div class="t" style="left:273px;top:214px;font-size:11.6px;color:#000;">-16.98mm</div>
<div class="t" style="left:173px;top:236px;font-size:11.6px;color:#000;">Y</div>
<div class="a" style="left:267px;top:232px;width:83px;height:20px;background:#fff;border:1px solid #6a6a6a;"></div>
<div class="t" style="left:273px;top:235px;font-size:11.6px;color:#000;">122.81mm</div>
<div class="t" style="left:173px;top:256px;font-size:11.6px;color:#000;">Offset</div>
<div class="a" style="left:267px;top:252px;width:83px;height:20px;background:#fff;border:1px solid #6a6a6a;"></div>
<div class="t" style="left:273px;top:255px;font-size:11.6px;color:#000;">0.00mm</div>
<div class="t" style="left:173px;top:276px;font-size:11.6px;color:#000;">Abstand 1</div>
<div class="a" style="left:267px;top:272px;width:83px;height:20px;background:#fff;border:1px solid #6a6a6a;"></div>
<div class="t" style="left:273px;top:275px;font-size:11.6px;color:#000;">0.00mm</div>
<div class="t" style="left:173px;top:297px;font-size:11.6px;color:#000;">Abstand 2</div>
<div class="a" style="left:267px;top:293px;width:83px;height:20px;background:#fff;border:1px solid #6a6a6a;"></div>
<div class="t" style="left:273px;top:296px;font-size:11.6px;color:#000;">0.00mm</div>
<div class="t" style="left:173px;top:317px;font-size:11.6px;color:#000;">Höhe 1</div>
<div class="a" style="left:267px;top:313px;width:83px;height:20px;background:#fff;border:1px solid #6a6a6a;"></div>
<div class="t" style="left:273px;top:316px;font-size:11.6px;color:#000;">60.33mm</div>
<div class="t" style="left:173px;top:337px;font-size:11.6px;color:#000;">Höhe 2</div>
<div class="a" style="left:267px;top:333px;width:83px;height:20px;background:#fff;border:1px solid #6a6a6a;"></div>
<div class="t" style="left:273px;top:336px;font-size:11.6px;color:#000;">0.00mm</div>
<div class="t" style="left:173px;top:358px;font-size:11.6px;color:#000;">Neigung 1</div>
<div class="a" style="left:267px;top:354px;width:83px;height:20px;background:#fff;border:1px solid #6a6a6a;"></div>
<div class="t" style="left:273px;top:357px;font-size:11.6px;color:#000;">0.00°</div>
<div class="t" style="left:173px;top:378px;font-size:11.6px;color:#000;">Neigung 2</div>
<div class="a" style="left:267px;top:374px;width:83px;height:20px;background:#fff;border:1px solid #6a6a6a;"></div>
<div class="t" style="left:273px;top:377px;font-size:11.6px;color:#000;">0.00°</div>
<div class="t" style="left:173px;top:398px;font-size:11.6px;color:#000;">Wandstärke</div>
<div class="a" style="left:267px;top:394px;width:83px;height:20px;background:#fff;border:1px solid #6a6a6a;"></div>
<div class="t" style="left:273px;top:397px;font-size:11.6px;color:#000;">0.00mm</div>
<div class="a" style="left:158px;top:309px;width:193px;height:27px;background:none;border:3px solid #d94545;box-shadow:0 1px 4px rgba(0,0,0,0.35)"></div>
<div class="a" style="left:10px;top:464px;width:481px;height:315px;background:#fff;border:1px solid #6a6a6a;"></div>
<div class="t" style="left:17px;top:470px;font-size:11.6px;color:#000;">Name</div>
<svg style="left:90px;top:466px" width="10" height="6" viewBox="0 0 10 6"><path d="M1 0.5 L5 4.5 L9 0.5" fill="none" stroke="#777" stroke-width="1.1"/></svg>
<div class="a" style="left:177px;top:466px;width:1px;height:21px;background:#ececec;"></div>
<div class="a" style="left:211px;top:466px;width:1px;height:21px;background:#ececec;"></div>
<div class="a" style="left:245px;top:466px;width:1px;height:21px;background:#ececec;"></div>
<div class="a" style="left:280px;top:466px;width:1px;height:21px;background:#ececec;"></div>
<div class="a" style="left:314px;top:466px;width:1px;height:21px;background:#ececec;"></div>
<div class="t" style="left:183px;top:470px;font-size:11.6px;color:#000;">F</div>
<div class="t" style="left:217px;top:470px;font-size:11.6px;color:#000;">T</div>
<div class="t" style="left:252px;top:470px;font-size:11.6px;color:#000;">B</div>
<div class="t" style="left:287px;top:470px;font-size:11.6px;color:#000;">A</div>
<div class="t" style="left:320px;top:470px;font-size:11.6px;color:#000;">S</div>
<div class="a" style="left:11px;top:488px;width:166px;height:290px;background:#f7f7f7;"></div>
<svg style="left:16px;top:490px" width="14" height="14" viewBox="0 0 14 14" preserveAspectRatio="none"><path d="M0 7.2 L6 10.4 L14 6.2 L14 9.4 L6 14 L0 10.6Z" fill="#e07850"/><path d="M0 4.4 L6 7.7 L14 3.5 L14 6.2 L6 10.4 L0 7.2Z" fill="#fff"/><path d="M0 4.4 L8.2 0 L14 3.5 L6 7.7Z" fill="#1a5cb0"/></svg>
<div class="t" style="left:33px;top:492px;font-size:11.8px;color:#000;transform:scaleX(0.915);transform-origin:0 0;">018_NB</div>
<div class="a" style="left:178px;top:489px;width:16px;height:16px;background:#000;"></div>
<div class="a" style="left:212px;top:496px;width:16px;height:3px;background:#000;"></div>
<div class="t" style="left:252px;top:492px;font-size:11.8px;color:#000;transform:scaleX(0.9);transform-origin:0 0;">0.18</div>
<svg style="left:282px;top:491px;" width="15" height="13" viewBox="0 0 15 13"><path d="M0.8 6 L4.5 10 L13.2 1" fill="none" stroke="#38c038" stroke-width="2.3"/></svg>
<svg style="left:315px;top:492px;" width="16" height="10" viewBox="0 0 16 10"><path d="M1.5 5 Q8 9.5 14.5 5" fill="none" stroke="#c8c8d0" stroke-width="0.8"/><circle cx="7.9" cy="5.6" r="2.7" fill="#5a84ac"/><circle cx="7.9" cy="5.6" r="1" fill="#000"/><path d="M1.2 4.9 Q8 -2.2 14.6 4.6" fill="none" stroke="#3a2222" stroke-width="1.7"/></svg>
<svg style="left:16px;top:509px" width="14" height="14" viewBox="0 0 14 14" preserveAspectRatio="none"><path d="M0 7.2 L6 10.4 L14 6.2 L14 9.4 L6 14 L0 10.6Z" fill="#e07850"/><path d="M0 4.4 L6 7.7 L14 3.5 L14 6.2 L6 10.4 L0 7.2Z" fill="#fff"/><path d="M0 4.4 L8.2 0 L14 3.5 L6 7.7Z" fill="#1a5cb0"/></svg>
<div class="t" style="left:33px;top:511px;font-size:11.8px;color:#000;transform:scaleX(0.915);transform-origin:0 0;">025_NB_Text</div>
<div class="a" style="left:178px;top:508px;width:16px;height:16px;background:#000;"></div>
<div class="a" style="left:212px;top:515px;width:16px;height:3px;background:#000;"></div>
<div class="t" style="left:252px;top:511px;font-size:11.8px;color:#000;transform:scaleX(0.9);transform-origin:0 0;">0.25</div>
<svg style="left:282px;top:510px;" width="15" height="13" viewBox="0 0 15 13"><path d="M0.8 6 L4.5 10 L13.2 1" fill="none" stroke="#38c038" stroke-width="2.3"/></svg>
<svg style="left:315px;top:511px;" width="16" height="10" viewBox="0 0 16 10"><path d="M1.5 5 Q8 9.5 14.5 5" fill="none" stroke="#c8c8d0" stroke-width="0.8"/><circle cx="7.9" cy="5.6" r="2.7" fill="#5a84ac"/><circle cx="7.9" cy="5.6" r="1" fill="#000"/><path d="M1.2 4.9 Q8 -2.2 14.6 4.6" fill="none" stroke="#3a2222" stroke-width="1.7"/></svg>
<svg style="left:16px;top:528px" width="14" height="14" viewBox="0 0 14 14" preserveAspectRatio="none"><path d="M0 7.2 L6 10.4 L14 6.2 L14 9.4 L6 14 L0 10.6Z" fill="#e07850"/><path d="M0 4.4 L6 7.7 L14 3.5 L14 6.2 L6 10.4 L0 7.2Z" fill="#fff"/><path d="M0 4.4 L8.2 0 L14 3.5 L6 7.7Z" fill="#1a5cb0"/></svg>
<div class="t" style="left:33px;top:530px;font-size:11.8px;color:#000;transform:scaleX(0.915);transform-origin:0 0;">035_NB</div>
<div class="a" style="left:178px;top:527px;width:16px;height:16px;background:#000;"></div>
<div class="a" style="left:212px;top:534px;width:16px;height:3px;background:#000;"></div>
<div class="t" style="left:252px;top:530px;font-size:11.8px;color:#000;transform:scaleX(0.9);transform-origin:0 0;">0.35</div>
<svg style="left:282px;top:529px;" width="15" height="13" viewBox="0 0 15 13"><path d="M0.8 6 L4.5 10 L13.2 1" fill="none" stroke="#38c038" stroke-width="2.3"/></svg>
<svg style="left:315px;top:530px;" width="16" height="10" viewBox="0 0 16 10"><path d="M1.5 5 Q8 9.5 14.5 5" fill="none" stroke="#c8c8d0" stroke-width="0.8"/><circle cx="7.9" cy="5.6" r="2.7" fill="#5a84ac"/><circle cx="7.9" cy="5.6" r="1" fill="#000"/><path d="M1.2 4.9 Q8 -2.2 14.6 4.6" fill="none" stroke="#3a2222" stroke-width="1.7"/></svg>
<svg style="left:16px;top:547px" width="14" height="14" viewBox="0 0 14 14" preserveAspectRatio="none"><path d="M0 7.2 L6 10.4 L14 6.2 L14 9.4 L6 14 L0 10.6Z" fill="#e07850"/><path d="M0 4.4 L6 7.7 L14 3.5 L14 6.2 L6 10.4 L0 7.2Z" fill="#fff"/><path d="M0 4.4 L8.2 0 L14 3.5 L6 7.7Z" fill="#1a5cb0"/></svg>
<div class="t" style="left:33px;top:549px;font-size:11.8px;color:#000;transform:scaleX(0.915);transform-origin:0 0;">035_NB_Text</div>
<div class="a" style="left:178px;top:546px;width:16px;height:16px;background:#000;"></div>
<div class="a" style="left:212px;top:553px;width:16px;height:3px;background:#000;"></div>
<div class="t" style="left:252px;top:549px;font-size:11.8px;color:#000;transform:scaleX(0.9);transform-origin:0 0;">0.35</div>
<svg style="left:282px;top:548px;" width="15" height="13" viewBox="0 0 15 13"><path d="M0.8 6 L4.5 10 L13.2 1" fill="none" stroke="#38c038" stroke-width="2.3"/></svg>
<svg style="left:315px;top:549px;" width="16" height="10" viewBox="0 0 16 10"><path d="M1.5 5 Q8 9.5 14.5 5" fill="none" stroke="#c8c8d0" stroke-width="0.8"/><circle cx="7.9" cy="5.6" r="2.7" fill="#5a84ac"/><circle cx="7.9" cy="5.6" r="1" fill="#000"/><path d="M1.2 4.9 Q8 -2.2 14.6 4.6" fill="none" stroke="#3a2222" stroke-width="1.7"/></svg>
<svg style="left:16px;top:566px" width="14" height="14" viewBox="0 0 14 14" preserveAspectRatio="none"><path d="M0 7.2 L6 10.4 L14 6.2 L14 9.4 L6 14 L0 10.6Z" fill="#e07850"/><path d="M0 4.4 L6 7.7 L14 3.5 L14 6.2 L6 10.4 L0 7.2Z" fill="#fff"/><path d="M0 4.4 L8.2 0 L14 3.5 L6 7.7Z" fill="#1a5cb0"/></svg>
<div class="t" style="left:33px;top:568px;font-size:11.8px;color:#000;transform:scaleX(0.915);transform-origin:0 0;">050_NB_Text</div>
<div class="a" style="left:178px;top:565px;width:16px;height:16px;background:#000;"></div>
<div class="a" style="left:212px;top:572px;width:16px;height:3px;background:#000;"></div>
<div class="t" style="left:252px;top:568px;font-size:11.8px;color:#000;transform:scaleX(0.9);transform-origin:0 0;">0.50</div>
<svg style="left:282px;top:567px;" width="15" height="13" viewBox="0 0 15 13"><path d="M0.8 6 L4.5 10 L13.2 1" fill="none" stroke="#38c038" stroke-width="2.3"/></svg>
<svg style="left:315px;top:568px;" width="16" height="10" viewBox="0 0 16 10"><path d="M1.5 5 Q8 9.5 14.5 5" fill="none" stroke="#c8c8d0" stroke-width="0.8"/><circle cx="7.9" cy="5.6" r="2.7" fill="#5a84ac"/><circle cx="7.9" cy="5.6" r="1" fill="#000"/><path d="M1.2 4.9 Q8 -2.2 14.6 4.6" fill="none" stroke="#3a2222" stroke-width="1.7"/></svg>
<svg style="left:16px;top:585px" width="14" height="14" viewBox="0 0 14 14" preserveAspectRatio="none"><path d="M0 7.2 L6 10.4 L14 6.2 L14 9.4 L6 14 L0 10.6Z" fill="#e07850"/><path d="M0 4.4 L6 7.7 L14 3.5 L14 6.2 L6 10.4 L0 7.2Z" fill="#fff"/><path d="M0 4.4 L8.2 0 L14 3.5 L6 7.7Z" fill="#1a5cb0"/></svg>
<div class="t" style="left:33px;top:587px;font-size:11.8px;color:#000;transform:scaleX(0.915);transform-origin:0 0;">070_NB</div>
<div class="a" style="left:178px;top:584px;width:16px;height:16px;background:#000;"></div>
<div class="a" style="left:212px;top:591px;width:16px;height:3px;background:#000;"></div>
<div class="t" style="left:252px;top:587px;font-size:11.8px;color:#000;transform:scaleX(0.9);transform-origin:0 0;">0.70</div>
<svg style="left:282px;top:586px;" width="15" height="13" viewBox="0 0 15 13"><path d="M0.8 6 L4.5 10 L13.2 1" fill="none" stroke="#38c038" stroke-width="2.3"/></svg>
<svg style="left:315px;top:587px;" width="16" height="10" viewBox="0 0 16 10"><path d="M1.5 5 Q8 9.5 14.5 5" fill="none" stroke="#c8c8d0" stroke-width="0.8"/><circle cx="7.9" cy="5.6" r="2.7" fill="#5a84ac"/><circle cx="7.9" cy="5.6" r="1" fill="#000"/><path d="M1.2 4.9 Q8 -2.2 14.6 4.6" fill="none" stroke="#3a2222" stroke-width="1.7"/></svg>
<svg style="left:16px;top:604px;" width="15" height="15" viewBox="0 0 15 15"><path d="M1 0 V15 M14 0 V15" stroke="#333" stroke-width="1"/><path d="M2 2 L10 8 L5 9 L13 14Z" fill="#e8e020" stroke="#a09000" stroke-width="0.6"/></svg>
<div class="t" style="left:33px;top:606px;font-size:11.8px;color:#000;transform:scaleX(0.915);transform-origin:0 0;">BEMASSUNGEN</div>
<div class="a" style="left:178px;top:603px;width:16px;height:16px;background:#000;"></div>
<div class="a" style="left:212px;top:610px;width:16px;height:3px;background:#000;"></div>
<div class="t" style="left:252px;top:606px;font-size:11.8px;color:#000;transform:scaleX(0.9);transform-origin:0 0;">0.00</div>
<svg style="left:282px;top:605px;" width="15" height="13" viewBox="0 0 15 13"><path d="M0.8 6 L4.5 10 L13.2 1" fill="none" stroke="#38c038" stroke-width="2.3"/></svg>
<svg style="left:315px;top:606px;" width="16" height="10" viewBox="0 0 16 10"><path d="M1.5 5 Q8 9.5 14.5 5" fill="none" stroke="#c8c8d0" stroke-width="0.8"/><circle cx="7.9" cy="5.6" r="2.7" fill="#5a84ac"/><circle cx="7.9" cy="5.6" r="1" fill="#000"/><path d="M1.2 4.9 Q8 -2.2 14.6 4.6" fill="none" stroke="#3a2222" stroke-width="1.7"/></svg>
<svg style="left:16px;top:623px;" width="15" height="15" viewBox="0 0 15 15"><path d="M1 2 H8 L11 5 V14 H1Z" fill="#fff" stroke="#889" stroke-width="0.8"/><path d="M12 3 L14 5 L8 11 L6 12 L7 10Z" fill="#3a7ac8"/></svg>
<div class="t" style="left:33px;top:625px;font-size:11.8px;color:#000;transform:scaleX(0.915);transform-origin:0 0;">BESCHRIFTUNGEN</div>
<div class="a" style="left:178px;top:622px;width:16px;height:16px;background:#000;"></div>
<div class="a" style="left:212px;top:629px;width:16px;height:3px;background:#000;"></div>
<div class="t" style="left:252px;top:625px;font-size:11.8px;color:#000;transform:scaleX(0.9);transform-origin:0 0;">0.35</div>
<svg style="left:282px;top:624px;" width="15" height="13" viewBox="0 0 15 13"><path d="M0.8 6 L4.5 10 L13.2 1" fill="none" stroke="#38c038" stroke-width="2.3"/></svg>
<svg style="left:315px;top:625px;" width="16" height="10" viewBox="0 0 16 10"><path d="M1.5 5 Q8 9.5 14.5 5" fill="none" stroke="#c8c8d0" stroke-width="0.8"/><circle cx="7.9" cy="5.6" r="2.7" fill="#5a84ac"/><circle cx="7.9" cy="5.6" r="1" fill="#000"/><path d="M1.2 4.9 Q8 -2.2 14.6 4.6" fill="none" stroke="#3a2222" stroke-width="1.7"/></svg>
<svg style="left:16px;top:642px" width="14" height="14" viewBox="0 0 14 14" preserveAspectRatio="none"><path d="M0 7.2 L6 10.4 L14 6.2 L14 9.4 L6 14 L0 10.6Z" fill="#e07850"/><path d="M0 4.4 L6 7.7 L14 3.5 L14 6.2 L6 10.4 L0 7.2Z" fill="#fff"/><path d="M0 4.4 L8.2 0 L14 3.5 L6 7.7Z" fill="#1a5cb0"/></svg>
<div class="t" style="left:33px;top:644px;font-size:11.8px;color:#000;transform:scaleX(0.915);transform-origin:0 0;">FREIHANDLINIE</div>
<div class="a" style="left:178px;top:641px;width:16px;height:16px;background:#000;"></div>
<div class="a" style="left:212px;top:648px;width:16px;height:3px;background:#000;"></div>
<div class="t" style="left:252px;top:644px;font-size:11.8px;color:#000;transform:scaleX(0.9);transform-origin:0 0;">0.25</div>
<svg style="left:282px;top:643px;" width="15" height="13" viewBox="0 0 15 13"><path d="M0.8 6 L4.5 10 L13.2 1" fill="none" stroke="#38c038" stroke-width="2.3"/></svg>
<svg style="left:315px;top:644px;" width="16" height="10" viewBox="0 0 16 10"><path d="M1.5 5 Q8 9.5 14.5 5" fill="none" stroke="#c8c8d0" stroke-width="0.8"/><circle cx="7.9" cy="5.6" r="2.7" fill="#5a84ac"/><circle cx="7.9" cy="5.6" r="1" fill="#000"/><path d="M1.2 4.9 Q8 -2.2 14.6 4.6" fill="none" stroke="#3a2222" stroke-width="1.7"/></svg>
<svg style="left:16px;top:661px;" width="15" height="15" viewBox="0 0 15 15"><rect x="1" y="6" width="9" height="4" rx="1" fill="#fff" stroke="#a020b0" stroke-width="1.3"/><rect x="10" y="2" width="4" height="12" fill="#fff" stroke="#333" stroke-width="1"/></svg>
<div class="t" style="left:33px;top:663px;font-size:11.8px;color:#000;transform:scaleX(0.915);transform-origin:0 0;">GEWINDELINIEN</div>
<div class="a" style="left:178px;top:660px;width:16px;height:16px;background:#a010b0;"></div>
<div class="a" style="left:212px;top:667px;width:16px;height:3px;background:#000;"></div>
<div class="t" style="left:252px;top:663px;font-size:11.8px;color:#000;transform:scaleX(0.9);transform-origin:0 0;">0.00</div>
<svg style="left:282px;top:662px;" width="15" height="13" viewBox="0 0 15 13"><path d="M0.8 6 L4.5 10 L13.2 1" fill="none" stroke="#38c038" stroke-width="2.3"/></svg>
<svg style="left:315px;top:663px;" width="16" height="10" viewBox="0 0 16 10"><path d="M1.5 5 Q8 9.5 14.5 5" fill="none" stroke="#c8c8d0" stroke-width="0.8"/><circle cx="7.9" cy="5.6" r="2.7" fill="#5a84ac"/><circle cx="7.9" cy="5.6" r="1" fill="#000"/><path d="M1.2 4.9 Q8 -2.2 14.6 4.6" fill="none" stroke="#3a2222" stroke-width="1.7"/></svg>
<svg style="left:15px;top:679px;" width="16" height="17" viewBox="0 0 16 17"><text x="0" y="7" font-family="Liberation Sans" font-weight="bold" font-size="7">H</text><path d="M13 2 L15 4 L5 15 L2 16 L3 13Z" fill="#4a9a4a"/></svg>
<div class="t" style="left:33px;top:682px;font-size:11.8px;color:#000;transform:scaleX(0.915);transform-origin:0 0;">HILFSLINIEN</div>
<div class="a" style="left:178px;top:679px;width:16px;height:16px;background:#00f000;"></div>
<div class="a" style="left:212px;top:686px;width:16px;height:3px;background:#000;"></div>
<div class="t" style="left:252px;top:682px;font-size:11.8px;color:#000;transform:scaleX(0.9);transform-origin:0 0;">0.18</div>
<svg style="left:282px;top:681px;" width="15" height="13" viewBox="0 0 15 13"><path d="M0.8 6 L4.5 10 L13.2 1" fill="none" stroke="#38c038" stroke-width="2.3"/></svg>
<svg style="left:315px;top:682px;" width="16" height="10" viewBox="0 0 16 10"><path d="M1.5 5 Q8 9.5 14.5 5" fill="none" stroke="#c8c8d0" stroke-width="0.8"/><circle cx="7.9" cy="5.6" r="2.7" fill="#5a84ac"/><circle cx="7.9" cy="5.6" r="1" fill="#000"/><path d="M1.2 4.9 Q8 -2.2 14.6 4.6" fill="none" stroke="#3a2222" stroke-width="1.7"/></svg>
<svg style="left:15px;top:699px;" width="16" height="15" viewBox="0 0 16 15"><path d="M1 3 V15 M15 3 V15 M1 6 H15" stroke="#222" stroke-width="1.2"/><path d="M5 1 H11" stroke="#6a6" stroke-width="2" stroke-dasharray="2 1"/></svg>
<div class="t" style="left:33px;top:701px;font-size:11.8px;color:#000;transform:scaleX(0.915);transform-origin:0 0;">MASSGRENZEN</div>
<div class="a" style="left:178px;top:698px;width:16px;height:16px;background:#0a0ab0;"></div>
<div class="a" style="left:212px;top:705px;width:16px;height:3px;background:#000;"></div>
<div class="t" style="left:252px;top:701px;font-size:11.8px;color:#000;transform:scaleX(0.9);transform-origin:0 0;">0.25</div>
<svg style="left:282px;top:700px;" width="15" height="13" viewBox="0 0 15 13"><path d="M0.8 6 L4.5 10 L13.2 1" fill="none" stroke="#38c038" stroke-width="2.3"/></svg>
<svg style="left:315px;top:701px;" width="16" height="10" viewBox="0 0 16 10"><path d="M1.5 5 Q8 9.5 14.5 5" fill="none" stroke="#c8c8d0" stroke-width="0.8"/><circle cx="7.9" cy="5.6" r="2.7" fill="#5a84ac"/><circle cx="7.9" cy="5.6" r="1" fill="#000"/><path d="M1.2 4.9 Q8 -2.2 14.6 4.6" fill="none" stroke="#3a2222" stroke-width="1.7"/></svg>
<svg style="left:15px;top:718px;" width="16" height="15" viewBox="0 0 16 15"><path d="M1 3 V15 M15 3 V15 M1 6 H15" stroke="#222" stroke-width="1.2"/><path d="M5 1 H11" stroke="#6a6" stroke-width="2" stroke-dasharray="2 1"/></svg>
<div class="t" style="left:33px;top:720px;font-size:11.8px;color:#000;transform:scaleX(0.915);transform-origin:0 0;">MASSLINIEN</div>
<div class="a" style="left:178px;top:717px;width:16px;height:16px;background:#0a0ab0;"></div>
<div class="a" style="left:212px;top:724px;width:16px;height:3px;background:#000;"></div>
<div class="t" style="left:252px;top:720px;font-size:11.8px;color:#000;transform:scaleX(0.9);transform-origin:0 0;">0.35</div>
<svg style="left:282px;top:719px;" width="15" height="13" viewBox="0 0 15 13"><path d="M0.8 6 L4.5 10 L13.2 1" fill="none" stroke="#38c038" stroke-width="2.3"/></svg>
<svg style="left:315px;top:720px;" width="16" height="10" viewBox="0 0 16 10"><path d="M1.5 5 Q8 9.5 14.5 5" fill="none" stroke="#c8c8d0" stroke-width="0.8"/><circle cx="7.9" cy="5.6" r="2.7" fill="#5a84ac"/><circle cx="7.9" cy="5.6" r="1" fill="#000"/><path d="M1.2 4.9 Q8 -2.2 14.6 4.6" fill="none" stroke="#3a2222" stroke-width="1.7"/></svg>
<svg style="left:15px;top:738px;" width="16" height="15" viewBox="0 0 16 15"><path d="M1 3 V15 M15 3 V15 M1 6 H15" stroke="#222" stroke-width="1.2"/><path d="M5 1 H11" stroke="#6a6" stroke-width="2" stroke-dasharray="2 1"/></svg>
<div class="t" style="left:33px;top:740px;font-size:11.8px;color:#000;transform:scaleX(0.915);transform-origin:0 0;">MASSTEXTE</div>
<div class="a" style="left:178px;top:737px;width:16px;height:16px;background:#a010b0;"></div>
<div class="a" style="left:212px;top:744px;width:16px;height:3px;background:#000;"></div>
<div class="t" style="left:252px;top:740px;font-size:11.8px;color:#000;transform:scaleX(0.9);transform-origin:0 0;">0.35</div>
<svg style="left:282px;top:739px;" width="15" height="13" viewBox="0 0 15 13"><path d="M0.8 6 L4.5 10 L13.2 1" fill="none" stroke="#38c038" stroke-width="2.3"/></svg>
<svg style="left:315px;top:740px;" width="16" height="10" viewBox="0 0 16 10"><path d="M1.5 5 Q8 9.5 14.5 5" fill="none" stroke="#c8c8d0" stroke-width="0.8"/><circle cx="7.9" cy="5.6" r="2.7" fill="#5a84ac"/><circle cx="7.9" cy="5.6" r="1" fill="#000"/><path d="M1.2 4.9 Q8 -2.2 14.6 4.6" fill="none" stroke="#3a2222" stroke-width="1.7"/></svg>
<svg style="left:15px;top:757px;" width="16" height="15" viewBox="0 0 16 15"><path d="M1 5 H15 M8 0 V14" stroke="#2a2a9a" stroke-width="1.6" stroke-dasharray="2 2"/></svg>
<div class="t" style="left:33px;top:759px;font-size:11.8px;color:#000;transform:scaleX(0.915);transform-origin:0 0;">MITTELLINIEN</div>
<div class="a" style="left:178px;top:756px;width:16px;height:16px;background:#0000f0;"></div>
<svg style="left:212px;top:762px;" width="16" height="4" viewBox="0 0 16 4"><rect x="0" y="0" width="3" height="3" fill="#000"/><rect x="5" y="0" width="3" height="3" fill="#000"/><rect x="10" y="0" width="6" height="3" fill="#000"/></svg>
<div class="t" style="left:252px;top:759px;font-size:11.8px;color:#000;transform:scaleX(0.9);transform-origin:0 0;">0.35</div>
<svg style="left:282px;top:758px;" width="15" height="13" viewBox="0 0 15 13"><path d="M0.8 6 L4.5 10 L13.2 1" fill="none" stroke="#38c038" stroke-width="2.3"/></svg>
<svg style="left:315px;top:759px;" width="16" height="10" viewBox="0 0 16 10"><path d="M1.5 5 Q8 9.5 14.5 5" fill="none" stroke="#c8c8d0" stroke-width="0.8"/><circle cx="7.9" cy="5.6" r="2.7" fill="#5a84ac"/><circle cx="7.9" cy="5.6" r="1" fill="#000"/><path d="M1.2 4.9 Q8 -2.2 14.6 4.6" fill="none" stroke="#3a2222" stroke-width="1.7"/></svg>
<div class="a" style="left:178px;top:774px;width:16px;height:4px;background:#000;"></div>
<svg style="left:16px;top:774px;" width="15" height="4" viewBox="0 0 15 4"><rect x="0" y="0" width="14" height="4" fill="none" stroke="#888" stroke-width="0.8"/></svg>
<div class="a" style="left:474px;top:465px;width:16px;height:313px;background:#f0f0f0;"></div>
<div class="a" style="left:475px;top:482px;width:14px;height:173px;background:#cdcdcd;"></div>
<svg style="left:477px;top:470px;" width="10" height="6" viewBox="0 0 10 6"><path d="M1 5 L5 1 L9 5" fill="none" stroke="#606060" stroke-width="1.5"/></svg>
<svg style="left:477px;top:766px;" width="10" height="6" viewBox="0 0 10 6"><path d="M1 1 L5 5 L9 1" fill="none" stroke="#606060" stroke-width="1.5"/></svg>
<div class="a" style="left:10px;top:785px;width:481px;height:28px;background:#ececec;"></div>
<div class="a" style="left:10px;top:813px;width:481px;height:1px;background:#a8a8a8;"></div>
<svg style="left:12px;top:787px;" width="24" height="24" viewBox="0 0 24 24"><path d="M2 2 H23 L21 8 L12 22 Z" fill="#e8e000"/><path d="M2 2 H23 L12 22Z" fill="#f4d000" opacity="0.6"/><path d="M2 4 L22 22 M22 4 L2 22" stroke="#d81838" stroke-width="3.2"/><path d="M12 9 V14" stroke="#6a7a40" stroke-width="2"/></svg>
<svg style="left:41px;top:787px;" width="18" height="24" viewBox="0 0 18 24"><path d="M2 10 H14 V20 Q8 23 2 20Z" fill="#e0e0e0" stroke="#b8b8b8" stroke-width="0.8"/><path d="M8 11 C8 4 16 2 15 8" fill="none" stroke="#2a5a9a" stroke-width="2"/><path d="M4 9 L8 13 L10 8Z" fill="#2a5a9a"/></svg>
<div class="a" style="left:10px;top:815px;width:481px;height:182px;background:#fff;border:1px solid #6a6a6a;"></div>
<div class="a" style="left:11px;top:816px;width:16px;height:163px;background:#f4f4f4;"></div>
<div class="a" style="left:11px;top:980px;width:479px;height:16px;background:#f0f0f0;"></div>
<div class="a" style="left:28px;top:981px;width:103px;height:14px;background:#cdcdcd;"></div>
<svg style="left:16px;top:983px;" width="6" height="10" viewBox="0 0 6 10"><path d="M5 1 L1 5 L5 9" fill="none" stroke="#606060" stroke-width="1.5"/></svg>
<svg style="left:479px;top:983px;" width="6" height="10" viewBox="0 0 6 10"><path d="M1 1 L5 5 L1 9" fill="none" stroke="#606060" stroke-width="1.5"/></svg>
<div class="a" style="left:530px;top:102px;width:1px;height:906px;background:#a0a0a0;"></div>
<div class="a" style="left:560px;top:102px;width:1px;height:906px;background:#a0a0a0;"></div>
<div class="a" style="left:505px;top:130px;width:22px;height:1px;background:#9a9a9a;"></div>
<div class="a" style="left:505px;top:158px;width:22px;height:1px;background:#9a9a9a;"></div>
<div class="a" style="left:505px;top:186px;width:22px;height:1px;background:#9a9a9a;"></div>
<div class="a" style="left:505px;top:214px;width:22px;height:1px;background:#9a9a9a;"></div>
<div class="a" style="left:505px;top:242px;width:22px;height:1px;background:#9a9a9a;"></div>
<div class="a" style="left:505px;top:270px;width:22px;height:1px;background:#9a9a9a;"></div>
<div class="a" style="left:505px;top:298px;width:22px;height:1px;background:#9a9a9a;"></div>
<div class="a" style="left:505px;top:326px;width:22px;height:1px;background:#9a9a9a;"></div>
<div class="a" style="left:505px;top:355px;width:22px;height:1px;background:#9a9a9a;"></div>
<div class="a" style="left:505px;top:383px;width:22px;height:1px;background:#9a9a9a;"></div>
<div class="a" style="left:505px;top:411px;width:22px;height:1px;background:#9a9a9a;"></div>
<div class="a" style="left:505px;top:439px;width:22px;height:1px;background:#9a9a9a;"></div>
<div class="a" style="left:505px;top:467px;width:22px;height:1px;background:#9a9a9a;"></div>
<div class="a" style="left:505px;top:495px;width:22px;height:1px;background:#9a9a9a;"></div>
<div class="a" style="left:505px;top:522px;width:22px;height:1px;background:#9a9a9a;"></div>
<svg style="left:505px;top:106px;" width="24" height="22" viewBox="0 0 24 22"><path d="M1.2 1.3 L14.2 7 L12.5 9.5 L17.5 16.5 L15.5 18.5 L10 12 L6.5 14Z" fill="#1c1c3c"/><path d="M1.2 1.3 L14.2 7 L9 9Z" fill="#4a4a70"/><path d="M18 17 L22 20.5 L18 24Z" fill="#000"/></svg>
<svg style="left:505px;top:133px;" width="24" height="24" viewBox="0 0 24 24"><defs><radialGradient id="vs1" cx="0.35" cy="0.3" r="0.75"><stop offset="0" stop-color="#5a98d8"/><stop offset="1" stop-color="#041a48"/></radialGradient></defs><circle cx="10.5" cy="10.5" r="9.5" fill="url(#vs1)"/><path d="M19 15 L23 18.5 L19 22Z" fill="#000"/></svg>
<svg style="left:505px;top:161px;" width="24" height="24" viewBox="0 0 24 24"><defs><radialGradient id="vs2" cx="0.4" cy="0.3" r="0.8"><stop offset="0" stop-color="#f0f080"/><stop offset="0.5" stop-color="#40c0b0"/><stop offset="1" stop-color="#0a4a40"/></radialGradient></defs><circle cx="10.5" cy="10.5" r="9.5" fill="url(#vs2)"/><path d="M6 8 Q10 3 13 8 L12 14 L16 12" fill="none" stroke="#111" stroke-width="2"/><path d="M19 15 L23 18.5 L19 22Z" fill="#000"/></svg>
<svg style="left:505px;top:189px;" width="24" height="24" viewBox="0 0 24 24"><path d="M4 8 L4 16 L8 14 L8 8 L14 11 L14 19 L18 15 V9" fill="none" stroke="#888" stroke-width="2.2"/><circle cx="6" cy="4" r="2" fill="#d03030"/><path d="M6 4 V9" stroke="#d03030"/><path d="M12 20 L16 17" stroke="#d03030" stroke-width="2"/><path d="M19 15 L23 18.5 L19 22Z" fill="#000"/></svg>
<svg style="left:505px;top:217px;" width="24" height="24" viewBox="0 0 24 24"><path d="M17 2 L21 6 L8 19 L3 21 L4 16Z" fill="#f08a10" stroke="#a05000" stroke-width="0.7"/><path d="M4 16 L8 19 L3 21Z" fill="#f0d8b0"/><path d="M3 21 L4 19.5 L5 20.5Z" fill="#000"/><path d="M19 15 L23 18.5 L19 22Z" fill="#000"/></svg>
<svg style="left:505px;top:245px;" width="24" height="24" viewBox="0 0 24 24"><path d="M2 4 Q8 2 14 8 L12 10 Q7 6 2 7Z" fill="#aaa"/><path d="M2 14 Q8 12 12 14 L13 16 Q7 17 2 18Z" fill="#ccc" stroke="#888" stroke-width="0.5"/><path d="M14 12 L21 6 L20 12Z M14 14 L21 18 L16 20Z" fill="#2060b0"/><path d="M19 15 L23 18.5 L19 22Z" fill="#000"/></svg>
<svg style="left:505px;top:273px;" width="24" height="24" viewBox="0 0 24 24"><path d="M4 10 A7 7 0 0 1 17 7" fill="none" stroke="#8aa8c8" stroke-width="3"/><path d="M18 13 A7 7 0 0 1 5 16" fill="none" stroke="#8aa8c8" stroke-width="3"/><path d="M8 9 H13 V6 L17 11 L13 15 V12 H8Z" fill="#2a5a8a"/><path d="M19 15 L23 18.5 L19 22Z" fill="#000"/></svg>
<svg style="left:505px;top:301px;" width="24" height="24" viewBox="0 0 24 24"><path d="M17 2 L21 6 L8 19 L3 21 L4 16Z" fill="#2a8a3a" stroke="#104a10" stroke-width="0.7"/><path d="M4 16 L8 19 L3 21Z" fill="#f0d8b0"/><path d="M19 15 L23 18.5 L19 22Z" fill="#000"/></svg>
<svg style="left:505px;top:329px;" width="24" height="24" viewBox="0 0 24 24"><path d="M11 1 V21 M1 11 H21" stroke="#1a1aa0" stroke-width="2" stroke-dasharray="2 2"/><path d="M19 15 L23 18.5 L19 22Z" fill="#000"/></svg>
<svg style="left:505px;top:357px;" width="24" height="24" viewBox="0 0 24 24"><path d="M2 2 V20 M20 2 V20 M2 8 H20" stroke="#333" stroke-width="1.2"/><path d="M6 3 L15 9 L9 11 L17 19 L7 13 L12 12Z" fill="#f0e020" stroke="#a09000" stroke-width="0.6"/><path d="M19 15 L23 18.5 L19 22Z" fill="#000"/></svg>
<svg style="left:505px;top:385px;" width="24" height="24" viewBox="0 0 24 24"><circle cx="5" cy="4" r="3" fill="none" stroke="#222" stroke-width="1"/><path d="M8 4 H20 M14 4 V9" stroke="#222" stroke-width="1.2"/><rect x="8" y="10" width="12" height="11" fill="#fff" stroke="#222" stroke-width="1"/><text x="10" y="19.5" font-family="Liberation Sans" font-size="10" fill="#000">A</text><path d="M20 15 L24 18.5 L20 22Z" fill="#000"/></svg>
<svg style="left:505px;top:413px;" width="24" height="24" viewBox="0 0 24 24"><text x="0" y="21" font-family="Liberation Sans" font-weight="bold" font-size="19" fill="#0a1a6a">A</text><text x="13" y="21" font-family="Liberation Sans" font-weight="bold" font-size="9" fill="#0a1a6a">b</text><path d="M18 1 L21 4 L13 13 L10 14 L11 11Z" fill="#2a6ac0"/></svg>
<svg style="left:505px;top:442px;" width="24" height="24" viewBox="0 0 24 24"><rect x="2" y="1" width="18" height="19" fill="#e8eaf0" stroke="#667" stroke-width="1"/><rect x="2.5" y="8" width="17" height="5" fill="#fff" stroke="#667" stroke-width="0.8"/><path d="M3 7 L8 2 M8 7 L13 2 M13 7 L18 2 M3 19 L8 14 M8 19 L13 14 M13 19 L18 14" stroke="#556" stroke-width="1"/><path d="M19 15 L23 18.5 L19 22Z" fill="#000"/></svg>
<svg style="left:505px;top:470px;" width="24" height="24" viewBox="0 0 24 24"><circle cx="10.5" cy="10.5" r="10" fill="#0808c8"/><circle cx="10.5" cy="5" r="1.8" fill="#fff"/><rect x="8.8" y="8" width="3.5" height="9" fill="#fff"/><path d="M19 15 L23 18.5 L19 22Z" fill="#000"/></svg>
<svg style="left:505px;top:498px;" width="24" height="24" viewBox="0 0 24 24"><path d="M2 1 V21 H21" stroke="#333" stroke-width="1" fill="none"/><path d="M5 15 L15 5 L20 9 L10 19Z" fill="#4a8ad0"/><path d="M5 15 L9 11 L14 15 L10 19Z" fill="#e02020"/></svg>
<div class="a" style="left:535px;top:130px;width:22px;height:1px;background:#9a9a9a;"></div>
<div class="a" style="left:535px;top:254px;width:22px;height:1px;background:#9a9a9a;"></div>
<div class="a" style="left:535px;top:378px;width:22px;height:1px;background:#9a9a9a;"></div>
<div class="a" style="left:535px;top:407px;width:22px;height:1px;background:#9a9a9a;"></div>
<div class="a" style="left:535px;top:435px;width:22px;height:1px;background:#9a9a9a;"></div>
<svg style="left:535px;top:106px;" width="22" height="22" viewBox="0 0 22 22"><path d="M1.5 1.7 L14 7.8 L12 10 L19.5 18 L17.5 19.8 L10 12 L5 13.5Z" fill="#fff" stroke="#7a7a7a" stroke-width="1.1"/></svg>
<svg style="left:535px;top:134px;" width="22" height="22" viewBox="0 0 22 22"><path d="M2 6 L11 1 L20 6 V16 L11 21 L2 16Z" fill="#245a9a"/><path d="M2 6 L11 1 L20 6 L11 11Z" fill="#3a72b4"/><path d="M2 6 L11 11 V21 L2 16Z" fill="#88c4f0"/></svg>
<svg style="left:535px;top:158px;" width="22" height="22" viewBox="0 0 22 22"><defs><linearGradient id="cyl" x1="0" x2="1"><stop offset="0" stop-color="#2a5a9a"/><stop offset="0.5" stop-color="#6aa0e0"/><stop offset="1" stop-color="#2a5a9a"/></linearGradient></defs><rect x="3" y="4" width="15" height="14" fill="url(#cyl)"/><ellipse cx="10.5" cy="18" rx="7.5" ry="3" fill="#2a5a9a"/><ellipse cx="10.5" cy="4" rx="7.5" ry="3" fill="#5a90d0"/></svg>
<svg style="left:535px;top:182px;" width="22" height="22" viewBox="0 0 22 22"><defs><radialGradient id="vs3" cx="0.35" cy="0.3" r="0.75"><stop offset="0" stop-color="#80b8f0"/><stop offset="1" stop-color="#123a78"/></radialGradient></defs><circle cx="10.5" cy="10.5" r="10" fill="url(#vs3)"/></svg>
<svg style="left:535px;top:209px;" width="22" height="18" viewBox="0 0 22 18"><ellipse cx="11" cy="8" rx="9" ry="5" fill="none" stroke="#2a5a98" stroke-width="3.6"/><ellipse cx="11" cy="7.3" rx="9" ry="5" fill="none" stroke="#6aa0d8" stroke-width="1.4"/></svg>
<svg style="left:535px;top:232px;" width="22" height="22" viewBox="0 0 22 22"><path d="M2 8 L7 3 H15 L20 8 V16 L15 21 H7 L2 16Z" fill="#2a5a9a"/><path d="M2 8 L7 3 H15 L20 8 L15 12 H7Z" fill="#1a4a8a"/><rect x="7" y="12" width="8" height="9" fill="#a8d8f8"/></svg>
<svg style="left:535px;top:258px;" width="22" height="22" viewBox="0 0 22 22"><path d="M4 4 Q10 0 17 9 Q20 14 16 18 Q12 20 8 13 Q5 8 4 4Z" fill="none" stroke="#3a7ac0" stroke-width="3"/></svg>
<svg style="left:535px;top:282px;" width="22" height="22" viewBox="0 0 22 22"><path d="M3 16 Q8 8 20 4" fill="none" stroke="#3a7ac0" stroke-width="3.5"/><circle cx="6" cy="17" r="3" fill="#fff" stroke="#3a6aa0" stroke-width="1.5"/><path d="M9 18 Q14 15 20 16" stroke="#888" stroke-width="1.5" fill="none"/></svg>
<svg style="left:535px;top:306px;" width="22" height="22" viewBox="0 0 22 22"><path d="M2 10 Q6 3 11 4 V20 Q5 20 2 16Z" fill="#3a7ac0"/><rect x="11" y="4" width="2" height="16" fill="#222"/><path d="M13 8 H20 V18 H13Z" fill="#e8a8b0"/><path d="M13 8 L17 5 H20 V8Z" fill="#d07080"/></svg>
<svg style="left:535px;top:330px;" width="22" height="22" viewBox="0 0 22 22"><path d="M1 14 L6 4 H16 L21 14 L11 20Z" fill="#3a7ac0"/><path d="M6 4 H16 L21 14 L11 10Z" fill="#6aa8e8"/><path d="M1 14 L11 10 L11 20Z" fill="#1a4a8a"/></svg>
<svg style="left:535px;top:354px;" width="22" height="22" viewBox="0 0 22 22"><ellipse cx="11" cy="4" rx="8.5" ry="3" fill="none" stroke="#3a7ac0" stroke-width="1.8"/><ellipse cx="11" cy="8" rx="8.5" ry="3" fill="none" stroke="#3a7ac0" stroke-width="1.8"/><ellipse cx="11" cy="12" rx="8.5" ry="3" fill="none" stroke="#3a7ac0" stroke-width="1.8"/><ellipse cx="11" cy="16" rx="8.5" ry="3" fill="none" stroke="#3a7ac0" stroke-width="1.8"/><ellipse cx="11" cy="20" rx="8.5" ry="3" fill="none" stroke="#3a7ac0" stroke-width="1.8"/></svg>
<svg style="left:535px;top:382px;" width="22" height="22" viewBox="0 0 22 22"><path d="M2 7 L13 2 L20 6 V16 L9 21 L2 17Z" fill="#3a7ac0"/><path d="M2 7 L13 2 L20 6 L9 11Z" fill="#6aa8e8"/><path d="M9 11 L20 6 V16 L9 21Z" fill="#d8e8f8"/><rect x="3" y="9" width="5" height="9" fill="#fff" opacity="0.6"/></svg>
<svg style="left:535px;top:410px;" width="22" height="22" viewBox="0 0 22 22"><path d="M2 11 L14 5 L21 8 V13 L9 19 L2 16Z" fill="#3a7ac0"/><path d="M2 11 L14 5 L21 8 L9 14Z" fill="#a8c8e8"/><path d="M2 11 L9 14 V19 L2 16Z" fill="#1a4a8a"/></svg>
<svg style="left:535px;top:438px;" width="22" height="22" viewBox="0 0 22 22"><defs><radialGradient id="b438a" cx="0.35" cy="0.3" r="0.7"><stop offset="0" stop-color="#fff"/><stop offset="1" stop-color="#808080"/></radialGradient><radialGradient id="b438b" cx="0.35" cy="0.3" r="0.7"><stop offset="0" stop-color="#fff"/><stop offset="1" stop-color="#808080"/></radialGradient></defs><circle cx="8" cy="8" r="7" fill="url(#b438a)"/><circle cx="14" cy="14" r="7" fill="url(#b438b)"/></svg>
<svg style="left:535px;top:462px;" width="22" height="22" viewBox="0 0 22 22"><defs><radialGradient id="b462a" cx="0.35" cy="0.3" r="0.7"><stop offset="0" stop-color="#fff"/><stop offset="1" stop-color="#808080"/></radialGradient><radialGradient id="b462b" cx="0.35" cy="0.3" r="0.7"><stop offset="0" stop-color="#fff"/><stop offset="1" stop-color="#d8d800"/></radialGradient></defs><circle cx="10.5" cy="10.5" r="10" fill="url(#b462a)"/><path d="M20 9 A10 10 0 0 1 10 20.5 Q14 14 20 9Z" fill="#e8e800"/></svg>
<svg style="left:535px;top:486px;" width="22" height="22" viewBox="0 0 22 22"><defs><radialGradient id="b486a" cx="0.35" cy="0.3" r="0.7"><stop offset="0" stop-color="#fff"/><stop offset="1" stop-color="#808080"/></radialGradient><radialGradient id="b486b" cx="0.35" cy="0.3" r="0.7"><stop offset="0" stop-color="#fff"/><stop offset="1" stop-color="#808080"/></radialGradient></defs><circle cx="8" cy="8" r="7" fill="url(#b486a)"/><circle cx="14" cy="14" r="7" fill="url(#b486b)"/><path d="M9 14 Q11 9 14 7 Q15 11 12 15Z" fill="#e8e800"/></svg>
<svg style="left:535px;top:510px;" width="22" height="22" viewBox="0 0 22 22"><defs><radialGradient id="b510a" cx="0.35" cy="0.3" r="0.7"><stop offset="0" stop-color="#fff"/><stop offset="1" stop-color="#808080"/></radialGradient><radialGradient id="b510b" cx="0.35" cy="0.3" r="0.7"><stop offset="0" stop-color="#fff"/><stop offset="1" stop-color="#60c020"/></radialGradient></defs><circle cx="8" cy="8" r="7" fill="url(#b510a)"/><circle cx="14" cy="14" r="7" fill="url(#b510b)"/></svg>
<div class="a" style="left:561px;top:102px;width:1343px;height:890px;background:#fff;"></div>
<svg style="left:0px;top:0px;pointer-events:none" width="1920" height="1040" viewBox="0 0 1920 1040"><defs><clipPath id="vp"><rect x="561" y="102" width="1343" height="890"/></clipPath><clipPath id="blk"><polygon points="1356,295 1135,414 1248,486 1468,367"/><polygon points="1135,414 1248,486 1248,685 1135,612"/><polygon points="1248,486 1468,367 1468,565 1248,685"/><polygon points="894.4,383.5 804.5,432 1026.8,572.5 1117,523.4"/><polygon points="804.5,432 1026.8,572.5 1026.8,633.5 804.5,492.4"/><polygon points="1026.8,572.5 1117,523.4 1117,584 1026.8,633.5"/><polygon points="1104,554 1047,584.6 1121.4,631.2 1178.6,601.4"/><polygon points="1047,584.6 1121.4,631.2 1121.4,670.9 1047,625.2"/><polygon points="1121.4,631.2 1178.6,601.4 1178.6,641.6 1121.4,670.9"/></clipPath><filter id="sh" x="-50%" y="-50%" width="200%" height="200%"><feGaussianBlur in="SourceAlpha" stdDeviation="1.5"/><feOffset dx="1" dy="2"/><feComponentTransfer><feFuncA type="linear" slope="0.45"/></feComponentTransfer><feMerge><feMergeNode/><feMergeNode in="SourceGraphic"/></feMerge></filter></defs><g clip-path="url(#vp)"><line x1="561" y1="593.4" x2="1190" y2="991.3" stroke="#c4c4c4" stroke-width="1"/><line x1="1196" y1="148.75" x2="1196" y2="992" stroke="#c4c4c4" stroke-width="1"/><line x1="1122.5" y1="102" x2="1196" y2="148.75" stroke="#c4c4c4" stroke-width="1"/><line x1="1196" y1="148.75" x2="1282" y2="102" stroke="#c4c4c4" stroke-width="1"/><line x1="561" y1="507.5" x2="1257.5" y2="132.5" stroke="#c4c4c4" stroke-width="1"/><line x1="1257.5" y1="132.5" x2="1904" y2="541.5" stroke="#c4c4c4" stroke-width="1"/><line x1="1207" y1="992" x2="1904" y2="616" stroke="#c4c4c4" stroke-width="1"/><line x1="878" y1="102" x2="1904" y2="751.0" stroke="#000" stroke-width="1"/><line x1="561" y1="587.941862022773" x2="1457.8" y2="102" stroke="#000" stroke-width="1"/><polygon points="1356,295 1135,414 1248,486 1468,367" fill="#8b8b8b"/><polygon points="1135,414 1248,486 1248,685 1135,612" fill="#555555"/><polygon points="1248,486 1468,367 1468,565 1248,685" fill="#525252"/><polygon points="894.4,383.5 804.5,432 1026.8,572.5 1117,523.4" fill="#8b8b8b"/><polygon points="804.5,432 1026.8,572.5 1026.8,633.5 804.5,492.4" fill="#555555"/><polygon points="1026.8,572.5 1117,523.4 1117,584 1026.8,633.5" fill="#525252"/><polygon points="1104,554 1047,584.6 1121.4,631.2 1178.6,601.4" fill="#8b8b8b"/><polygon points="1047,584.6 1121.4,631.2 1121.4,670.9 1047,625.2" fill="#555555"/><polygon points="1121.4,631.2 1178.6,601.4 1178.6,641.6 1121.4,670.9" fill="#525252"/><g clip-path="url(#blk)"><line x1="878" y1="102" x2="1904" y2="751.0" stroke="#d8d8d8" stroke-width="1"/><line x1="561" y1="587.941862022773" x2="1457.8" y2="102" stroke="#b8b8b8" stroke-width="1"/><line x1="1196" y1="148.75" x2="1196" y2="992" stroke="#c8c8c8" stroke-width="1"/></g><line x1="894.4" y1="396" x2="894.4" y2="438" stroke="#2a2a80" stroke-width="1.2" stroke-dasharray="6 2 1 2"/><line x1="816" y1="509" x2="850" y2="492" stroke="#2a2a80" stroke-width="1.2" stroke-dasharray="6 2 1 2"/><line x1="906" y1="484" x2="983" y2="438" stroke="#6a6a6a" stroke-width="1" stroke-dasharray="6 2 1 2"/><line x1="818" y1="417" x2="822" y2="420" stroke="#333" stroke-width="1" stroke-dasharray="6 2 1 2"/><line x1="972" y1="428" x2="978" y2="424" stroke="#333" stroke-width="1" stroke-dasharray="6 2 1 2"/><line x1="1111" y1="553" x2="1111" y2="595" stroke="#2a2a80" stroke-width="1.2" stroke-dasharray="6 2 1 2"/><line x1="1048" y1="647" x2="1085" y2="627" stroke="#2a2a80" stroke-width="1.2" stroke-dasharray="6 2 1 2"/><line x1="1148" y1="636" x2="1182" y2="657" stroke="#2a2a80" stroke-width="1.2" stroke-dasharray="6 2 1 2"/><line x1="1111" y1="663" x2="1111" y2="676" stroke="#333" stroke-width="1" stroke-dasharray="6 2 1 2"/><line x1="1403" y1="502" x2="1437" y2="522" stroke="#2a2a80" stroke-width="1.2" stroke-dasharray="6 2 1 2"/><polygon points="1222,265.6 1355,193 1467.4,265.6 1467.4,366 1335.4,438.5 1222,366" fill="#a8a7a8" fill-opacity="0.95"/><polygon points="1222,265.6 1355,193 1467.4,265.6 1335.4,334" fill="#c8c6c8" fill-opacity="0.9"/><line x1="1222" y1="319.59844054580896" x2="1252" y2="338.57504873294346" stroke="#3a3a3a" stroke-width="1"/><polygon points="1357.5,282 1492,366.5 1333,452 1197,367" fill="#a8e4ee" fill-opacity="0.5"/><polygon points="1222,366 1355,296.3 1467.4,366 1335.4,438.5" fill="#6f8a8c"/><polygon points="1357.5,282 1492,366.5 1333,452 1197,367" fill="none" stroke="#000" stroke-width="1.1"/><line x1="1222" y1="265.6" x2="1355" y2="193" stroke="#d4b840" stroke-width="1.4"/><line x1="1355" y1="193" x2="1467.4" y2="265.6" stroke="#d4b840" stroke-width="1.4"/><line x1="1222" y1="265.6" x2="1335.4" y2="334" stroke="#d4b840" stroke-width="1.4"/><line x1="1335.4" y1="334" x2="1467.4" y2="265.6" stroke="#d4b840" stroke-width="1.4"/><line x1="1222" y1="265.6" x2="1222" y2="366" stroke="#d4b840" stroke-width="1.4"/><line x1="1467.4" y1="265.6" x2="1467.4" y2="366" stroke="#d4b840" stroke-width="1.4"/><line x1="1355" y1="193" x2="1355" y2="296.3" stroke="#c8b870" stroke-width="1.4"/><line x1="1335.4" y1="334" x2="1335.4" y2="438.5" stroke="#d8d860" stroke-width="1.4"/><line x1="1222" y1="366" x2="1355" y2="296.3" stroke="#d8d860" stroke-width="1.4"/><line x1="1355" y1="296.3" x2="1467.4" y2="366" stroke="#d8d860" stroke-width="1.4"/><line x1="1222" y1="366" x2="1335.4" y2="438.5" stroke="#d8d860" stroke-width="1.4"/><line x1="1335.4" y1="438.5" x2="1467.4" y2="366" stroke="#d8d860" stroke-width="1.4"/><g stroke="#000" stroke-width="1.1" fill="none"><path d="M1345.7 366 V330"/><path d="M1345.7 366 L1368 354"/><path d="M1345.7 366 L1325 355"/><path d="M1364 353 L1369 354 L1366 357"/><path d="M1349 332 H1356 L1349 341 H1356"/><path d="M1347 340 L1352 334" stroke="#2040c0"/><path d="M1368 346 L1376 355 M1376 346 L1368 355"/><path d="M1323 345 L1327 350 L1331 345 M1327 350 V355 M1323 355 L1326 357"/></g><path d="M1505.3 265.6 L1521.5 293 L1513 293.5 L1518 367 L1507.5 367.5 L1503 295 L1493 295.6Z" fill="#f04040" filter="url(#sh)"/></g></svg>
<div class="a" style="left:636px;top:184px;width:178px;height:109px;background:#fff;border:1px solid #c8c8c8;box-shadow:0 3px 10px rgba(0,0,0,0.3)"></div>
<div class="t" style="left:644px;top:192px;font-size:11.6px;color:#a0a0a0;">Vorgaben Schiebekörper</div>
<div class="a" style="left:641px;top:215px;width:168px;height:23px;background:#e1e1e1;border:1px solid #adadad;"></div>
<div class="t" style="left:645px;top:220px;font-size:11.6px;color:#000;">Höhe</div>
<svg style="left:795px;top:224px" width="10" height="6" viewBox="0 0 10 6"><path d="M1 0.5 L5 4.5 L9 0.5" fill="none" stroke="#333" stroke-width="1.1"/></svg>
<div class="a" style="left:641px;top:241px;width:168px;height:23px;background:#e1e1e1;border:1px solid #adadad;"></div>
<div class="t" style="left:645px;top:246px;font-size:11.6px;color:#000;">Linien verlängern</div>
<svg style="left:795px;top:250px" width="10" height="6" viewBox="0 0 10 6"><path d="M1 0.5 L5 4.5 L9 0.5" fill="none" stroke="#333" stroke-width="1.1"/></svg>
<div class="a" style="left:641px;top:267px;width:168px;height:23px;background:#e1e1e1;border:1px solid #adadad;"></div>
<div class="t" style="left:645px;top:272px;font-size:11.6px;color:#000;">vollständig erzeugen</div>
<svg style="left:795px;top:276px" width="10" height="6" viewBox="0 0 10 6"><path d="M1 0.5 L5 4.5 L9 0.5" fill="none" stroke="#333" stroke-width="1.1"/></svg>
<div class="a" style="left:633px;top:210px;width:61px;height:30px;background:none;border:3px solid #d94545;box-shadow:0 1px 4px rgba(0,0,0,0.3)"></div>
<div class="a" style="left:1904px;top:102px;width:16px;height:890px;background:#f0f0f0;"></div>
<div class="a" style="left:1905px;top:430px;width:14px;height:417px;background:#cdcdcd;"></div>
<svg style="left:1906px;top:109px;" width="10" height="6" viewBox="0 0 10 6"><path d="M1 5 L5 1 L9 5" fill="none" stroke="#606060" stroke-width="1.5"/></svg>
<svg style="left:1906px;top:980px;" width="10" height="6" viewBox="0 0 10 6"><path d="M1 1 L5 5 L9 1" fill="none" stroke="#606060" stroke-width="1.5"/></svg>
<div class="a" style="left:561px;top:992px;width:1343px;height:16px;background:#f0f0f0;"></div>
<div class="a" style="left:894px;top:993px;width:641px;height:14px;background:#cdcdcd;"></div>
<svg style="left:567px;top:995px;" width="6" height="10" viewBox="0 0 6 10"><path d="M5 1 L1 5 L5 9" fill="none" stroke="#606060" stroke-width="1.5"/></svg>
<svg style="left:1891px;top:995px;" width="6" height="10" viewBox="0 0 6 10"><path d="M1 1 L5 5 L1 9" fill="none" stroke="#606060" stroke-width="1.5"/></svg>
<div class="a" style="left:1904px;top:992px;width:16px;height:16px;background:#f0f0f0;"></div>
<div class="a" style="left:0px;top:1008px;width:1920px;height:1px;background:#a0a0a0;"></div>
<div class="a" style="left:0px;top:1009px;width:1920px;height:31px;background:#f0f0f0;"></div>
<div class="a" style="left:0px;top:1015px;width:197px;height:1px;background:#a0a0a0;"></div>
<div class="a" style="left:0px;top:1015px;width:1px;height:18px;background:#a0a0a0;"></div>
<div class="a" style="left:200px;top:1015px;width:1347px;height:1px;background:#a0a0a0;"></div>
<div class="a" style="left:200px;top:1015px;width:1px;height:18px;background:#a0a0a0;"></div>
<div class="t" style="left:2px;top:1018px;font-size:11.7px;color:#000;">Schiebekörper -&gt; Z</div>
<div class="t" style="left:202px;top:1018px;font-size:11.7px;color:#000;">Definieren Sie die Höhe durch einen Punkt (mittlere Maustaste) oder Eingabe.</div>
<div class="t" style="left:1555px;top:1016px;font-size:11.7px;color:#000;">-16.98mm</div>
<div class="t" style="left:1659px;top:1016px;font-size:11.7px;color:#000;">122.81mm</div>
<div class="a" style="left:1856px;top:1010px;width:64px;height:30px;background:#e8e8e8;"></div>
<svg style="left:1845px;top:1006px;" width="75" height="34" viewBox="0 0 75 34"><ellipse cx="40" cy="19.3" rx="26.5" ry="12.3" fill="#dc0a30" transform="rotate(-9 40 19.3)"/><text x="23" y="19.8" font-family="Liberation Sans" font-weight="bold" font-size="9.3" letter-spacing="1.5" fill="#fff" stroke="#fff" stroke-width="0.5">Data</text><text x="33" y="28.3" font-family="Liberation Sans" font-weight="bold" font-style="italic" font-size="10.2" letter-spacing="1.1" fill="#000" stroke="#000" stroke-width="0.5">Solid</text></svg>
</body></html>
